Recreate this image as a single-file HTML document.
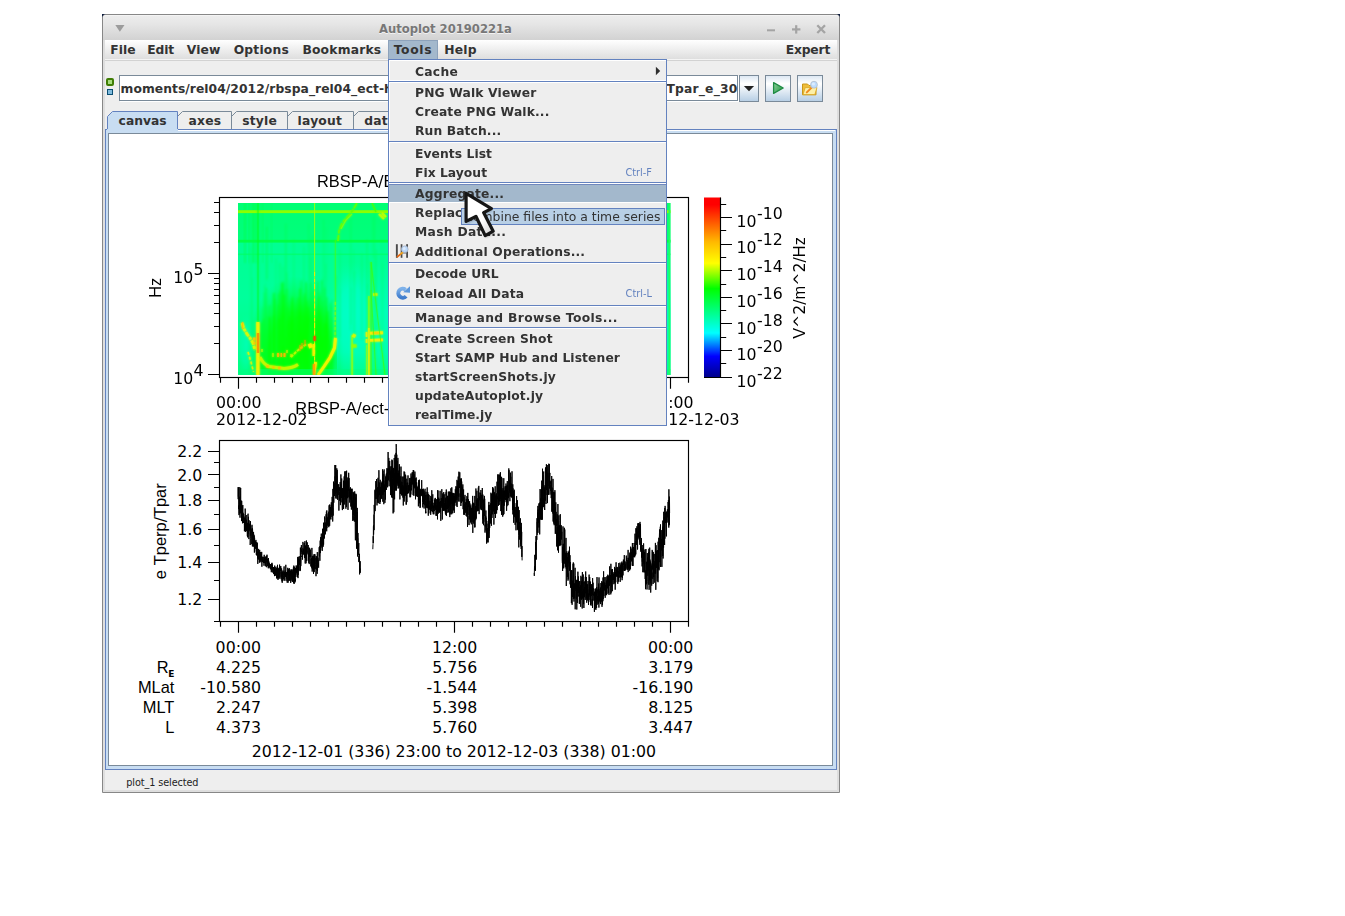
<!DOCTYPE html>
<html><head><meta charset="utf-8"><title>Autoplot 20190221a</title>
<style>
html,body{margin:0;padding:0;background:#fff;}
body{width:1345px;height:916px;position:relative;overflow:hidden;font-family:'DejaVu Sans', 'Liberation Sans', sans-serif;color:#333;}
.abs{position:absolute;box-sizing:border-box;}
.t{position:absolute;white-space:nowrap;line-height:20px;height:20px;}
svg{position:absolute;left:0;top:0;overflow:visible;}
.btn{border:1px solid #7a8a99;background:linear-gradient(#dde8f3,#fff 30%,#fff 32%,#b8cfe5);}
</style></head>
<body>
<div id="window">
<div class="abs" style="left:102px;top:14px;width:4px;height:4px;background:#0b1b3d;"></div>
<div class="abs" style="left:836px;top:14px;width:4px;height:4px;background:#0b1b3d;"></div>
<div class="abs" style="left:102px;top:14px;width:738px;height:779px;border:1px solid #878787;border-radius:4px 4px 0 0;background:#eee;box-shadow:inset 2px 0 0 #dedede, inset -2px 0 0 #dedede, inset 0 -2px 0 #dedede;"></div>
<div class="abs" style="left:103px;top:15px;width:736px;height:25px;background:linear-gradient(#ededed,#e6e6e6 35%,#d2d2d2);border-radius:3px 3px 0 0;box-shadow:inset 0 1px 0 #f4f4f4;"></div>
<div class="t" style="top:19.00px;font-size:11.6px;font-family:'DejaVu Sans', 'Liberation Sans', sans-serif;color:#777;font-weight:bold;left:145.50px;width:600px;text-align:center;text-shadow:0 1px 0 #f2f2f2;">Autoplot 20190221a</div>
<svg width="1345" height="916"><path d="M115.3 25 L124.5 25 L119.9 31.8 Z" fill="#9c9c9c"/><rect x="767" y="29.3" width="8" height="2" fill="#a4a4a4"/><rect x="792" y="28.3" width="8.4" height="2.2" fill="#a4a4a4"/><rect x="795.1" y="25.2" width="2.2" height="8.4" fill="#a4a4a4"/><path d="M817.3 25.3 L825 33 M825 25.3 L817.3 33" stroke="#a4a4a4" stroke-width="2.3" fill="none"/></svg>
<div class="abs" style="left:105px;top:40px;width:732px;height:21px;background:linear-gradient(#fff,#dedede 19px,#f4f4f4 19px,#f4f4f4 20px,#d2d2d2 20px);"></div>
<div class="abs" style="left:388px;top:40px;width:50px;height:20px;background:#a3b8cc;border:1px solid #8da2bb;border-bottom:none;"></div>
<div class="t" style="top:40.00px;font-size:12.3px;font-family:'DejaVu Sans', 'Liberation Sans', sans-serif;color:#333;font-weight:bold;left:110.30px;letter-spacing:0.023px;">File</div>
<div class="t" style="top:40.00px;font-size:12.3px;font-family:'DejaVu Sans', 'Liberation Sans', sans-serif;color:#333;font-weight:bold;left:147.20px;letter-spacing:-0.079px;">Edit</div>
<div class="t" style="top:40.00px;font-size:12.3px;font-family:'DejaVu Sans', 'Liberation Sans', sans-serif;color:#333;font-weight:bold;left:186.80px;letter-spacing:0.1px;">View</div>
<div class="t" style="top:40.00px;font-size:12.3px;font-family:'DejaVu Sans', 'Liberation Sans', sans-serif;color:#333;font-weight:bold;left:233.70px;letter-spacing:0.2px;">Options</div>
<div class="t" style="top:40.00px;font-size:12.3px;font-family:'DejaVu Sans', 'Liberation Sans', sans-serif;color:#333;font-weight:bold;left:302.40px;letter-spacing:0.2px;">Bookmarks</div>
<div class="t" style="top:40.00px;font-size:12.3px;font-family:'DejaVu Sans', 'Liberation Sans', sans-serif;color:#333;font-weight:bold;left:393.70px;letter-spacing:0.662px;">Tools</div>
<div class="t" style="top:40.00px;font-size:12.3px;font-family:'DejaVu Sans', 'Liberation Sans', sans-serif;color:#333;font-weight:bold;left:444.20px;letter-spacing:0.221px;">Help</div>
<div class="t" style="top:40.00px;font-size:12.3px;font-family:'DejaVu Sans', 'Liberation Sans', sans-serif;color:#333;font-weight:bold;left:785.70px;letter-spacing:-0.155px;">Expert</div>
<div class="abs" style="left:106px;top:78px;width:8px;height:8px;border:2px solid #3f7d04;border-radius:2px;background:#a6dc7c;"></div>
<div class="abs" style="left:107px;top:89px;width:6px;height:6px;border:1px solid #0a4e74;background:#7fbbdd;"></div>
<div class="abs" style="left:119px;top:75px;width:619px;height:26px;border:1px solid #7a8a99;background:#fff;box-shadow:inset 1px 1px 0 #fff, 1px 1px 0 #fff;"></div>
<div class="t" style="top:79.00px;font-size:12.3px;font-family:'DejaVu Sans', 'Liberation Sans', sans-serif;color:#333;font-weight:bold;left:120.60px;letter-spacing:0.05px;width:330px;overflow:hidden;">moments/rel04/2012/rbspa_rel04_ect-hope-mom-L3_20121202</div>
<div class="abs" style="left:470px;top:76px;width:267.5px;height:24px;overflow:hidden;"><div class="t" style="top:3.00px;font-size:12.3px;font-family:'DejaVu Sans', 'Liberation Sans', sans-serif;color:#333;font-weight:bold;left:0.00px;letter-spacing:0.2px;left:auto;right:0;">_v6.1.0.cdf?Tperp_e_30/Tpar_e_30</div></div>
<div class="abs btn" style="left:739px;top:75px;width:20px;height:27px;"></div>
<div class="abs btn" style="left:765px;top:75px;width:26px;height:27px;"></div>
<div class="abs btn" style="left:797px;top:75px;width:26px;height:27px;"></div>
<svg width="1345" height="916"><path d="M743.9 86.1 L754.1 86.1 L749 91.2 Z" fill="#222"/><defs><linearGradient id="gplay" x1="0" y1="0" x2="1" y2="0.6"><stop offset="0" stop-color="#8ad19a"/><stop offset="1" stop-color="#2f9a4a"/></linearGradient></defs><path d="M773.6 82.6 L783.2 88 L773.6 93.4 Z" fill="url(#gplay)" stroke="#1f8c44" stroke-width="1.3" stroke-linejoin="round"/><path d="M802.5 84 h5 l1.5 1.5 h7 v9.3 h-13.5 z" fill="#efbe3c" stroke="#c9971a" stroke-width="1"/><path d="M803 94.6 l2.2 -7 h11.8 l-2.2 7 z" fill="#fdf0a8" stroke="#d9a520" stroke-width="0.8"/><path d="M811.6 87.6 L806.8 92.4" stroke="#f08a20" stroke-width="2" stroke-linecap="round"/><circle cx="814" cy="84.7" r="3.4" fill="#bcdcff" stroke="#b9c4d4" stroke-width="1"/><circle cx="813.4" cy="84" r="1.6" fill="#dcecff"/></svg>
<svg width="1345" height="916"><path d="M353.5 130 L353.5 116.5 L358.5 111.5 L419.5 111.5 L419.5 130" fill="#eeeeee" stroke="#7a8a99" stroke-width="1"/><path d="M287.5 130 L287.5 116.5 L292.5 111.5 L353.5 111.5 L353.5 130" fill="#eeeeee" stroke="#7a8a99" stroke-width="1"/><path d="M231.5 130 L231.5 116.5 L236.5 111.5 L287.5 111.5 L287.5 130" fill="#eeeeee" stroke="#7a8a99" stroke-width="1"/><path d="M177.5 130 L177.5 116.5 L182.5 111.5 L231.5 111.5 L231.5 130" fill="#eeeeee" stroke="#7a8a99" stroke-width="1"/><path d="M107.5 130 L107.5 116.5 L112.5 111.5 L177.5 111.5 L177.5 130" fill="#c8ddf2" stroke="#6382bf" stroke-width="1"/></svg>
<div class="t" style="top:111.00px;font-size:12.3px;font-family:'DejaVu Sans', 'Liberation Sans', sans-serif;color:#333;font-weight:bold;left:118.60px;letter-spacing:0.01px;">canvas</div>
<div class="t" style="top:111.00px;font-size:12.3px;font-family:'DejaVu Sans', 'Liberation Sans', sans-serif;color:#333;font-weight:bold;left:188.60px;letter-spacing:0.2px;">axes</div>
<div class="t" style="top:111.00px;font-size:12.3px;font-family:'DejaVu Sans', 'Liberation Sans', sans-serif;color:#333;font-weight:bold;left:242.20px;letter-spacing:0.2px;">style</div>
<div class="t" style="top:111.00px;font-size:12.3px;font-family:'DejaVu Sans', 'Liberation Sans', sans-serif;color:#333;font-weight:bold;left:297.60px;letter-spacing:0.2px;">layout</div>
<div class="t" style="top:111.00px;font-size:12.3px;font-family:'DejaVu Sans', 'Liberation Sans', sans-serif;color:#333;font-weight:bold;left:364.20px;letter-spacing:0.2px;">data</div>
<div class="abs" style="left:105px;top:129px;width:732px;height:641px;border:1px solid #6382bf;background:#c8ddf2;"></div>
<div class="abs" style="left:178px;top:130px;width:657px;height:1px;background:#fff;"></div>
<div class="abs" style="left:107px;top:129px;width:70.5px;height:2px;background:#c8ddf2;"></div>
<div class="abs" style="left:108px;top:133px;width:725px;height:633px;border:1px solid #7a8a99;background:#fff;"></div>
<div class="t" style="top:773.00px;font-size:9.7px;font-family:'DejaVu Sans', 'Liberation Sans', sans-serif;color:#222;left:126.30px;letter-spacing:-0.1px;">plot_1 selected</div>
<div id="plots"><svg id="canvas" width="1345" height="916" font-family="'DejaVu Sans', sans-serif" font-size="15.75" fill="#000">
<defs>
<linearGradient id="cb" x1="0" y1="1" x2="0" y2="0">
<stop offset="0" stop-color="#000089"/><stop offset="0.1176" stop-color="#0000ff"/><stop offset="0.247" stop-color="#00ffff"/>
<stop offset="0.494" stop-color="#00ff00"/><stop offset="0.635" stop-color="#ffff00"/><stop offset="0.753" stop-color="#ffb900"/>
<stop offset="0.867" stop-color="#ff5400"/><stop offset="0.96" stop-color="#ff0000"/><stop offset="1" stop-color="#ff0000"/></linearGradient>
<linearGradient id="sgv" x1="0" y1="0" x2="0" y2="1">
<stop offset="0" stop-color="#00ff74"/><stop offset="0.22" stop-color="#00ff7c"/><stop offset="0.23" stop-color="#00ff92"/><stop offset="0.55" stop-color="#00ff9c"/><stop offset="1" stop-color="#00ff80"/></linearGradient>
<linearGradient id="cyr" x1="0" y1="0" x2="0" y2="1"><stop offset="0" stop-color="#00ffc0" stop-opacity="0"/><stop offset="0.45" stop-color="#00ffc4" stop-opacity="0.75"/><stop offset="0.8" stop-color="#00ffc0" stop-opacity="0.7"/><stop offset="1" stop-color="#00ffa0" stop-opacity="0.5"/></linearGradient>
<radialGradient id="blobg"><stop offset="0" stop-color="#00ff00" stop-opacity="1"/><stop offset="0.55" stop-color="#00ff10" stop-opacity="0.85"/><stop offset="1" stop-color="#00ff40" stop-opacity="0"/></radialGradient>
<radialGradient id="blobc"><stop offset="0" stop-color="#00ffd0" stop-opacity="1"/><stop offset="0.55" stop-color="#00ffc0" stop-opacity="0.8"/><stop offset="1" stop-color="#00ffa0" stop-opacity="0"/></radialGradient>
<filter id="bl1" x="-20%" y="-20%" width="140%" height="140%" color-interpolation-filters="sRGB"><feGaussianBlur stdDeviation="0.8"/></filter>
<filter id="bl2" x="-20%" y="-20%" width="140%" height="140%"><feGaussianBlur stdDeviation="1.4"/></filter>
<clipPath id="sgclip"><rect x="238" y="203" width="432.5" height="172"/></clipPath>
</defs>
<g clip-path="url(#sgclip)">
<rect x="238" y="203" width="433" height="172" fill="url(#sgv)"/>
<ellipse cx="296" cy="356" rx="50" ry="80" fill="url(#blobg)"/>
<ellipse cx="302" cy="342" rx="34" ry="46" fill="url(#blobg)"/>
<ellipse cx="322" cy="345" rx="16" ry="40" fill="url(#blobg)" opacity="0.8"/>
<ellipse cx="352" cy="318" rx="26" ry="56" fill="url(#blobc)"/>
<ellipse cx="246" cy="345" rx="10" ry="32" fill="url(#blobc)" opacity="0.55"/>
<rect x="337" y="262" width="334" height="113" fill="url(#cyr)"/>
<ellipse cx="560" cy="330" rx="120" ry="70" fill="url(#blobc)" opacity="0.7"/>
<g filter="url(#bl1)">
<rect x="277.6" y="304.5" width="1.2" height="70.5" fill="#00ff00" opacity="0.41"/>
<rect x="306.3" y="282.9" width="0.8" height="92.1" fill="#00ff00" opacity="0.49"/>
<rect x="279.2" y="290.5" width="1.8" height="84.5" fill="#00ff00" opacity="0.36"/>
<rect x="321.9" y="301.4" width="1.4" height="73.6" fill="#00ff00" opacity="0.25"/>
<rect x="307.0" y="319.1" width="1.3" height="55.9" fill="#00ff00" opacity="0.46"/>
<rect x="309.7" y="282.9" width="1.6" height="92.1" fill="#00ff00" opacity="0.41"/>
<rect x="282.3" y="281.4" width="1.7" height="93.6" fill="#00ff00" opacity="0.37"/>
<rect x="313.2" y="319.5" width="1.5" height="55.5" fill="#00ff00" opacity="0.52"/>
<rect x="289.2" y="316.0" width="1.2" height="59.0" fill="#00ff00" opacity="0.53"/>
<rect x="325.0" y="284.4" width="0.9" height="90.6" fill="#00ff00" opacity="0.28"/>
<rect x="331.4" y="299.6" width="1.4" height="75.4" fill="#00ff00" opacity="0.31"/>
<rect x="297.5" y="297.4" width="1.2" height="77.6" fill="#00ff00" opacity="0.40"/>
<rect x="303.2" y="320.7" width="1.5" height="54.3" fill="#00ff00" opacity="0.53"/>
<rect x="323.4" y="324.6" width="1.5" height="50.4" fill="#00ff00" opacity="0.26"/>
<rect x="323.7" y="323.4" width="1.7" height="51.6" fill="#00ff00" opacity="0.40"/>
<rect x="312.8" y="289.5" width="1.6" height="85.5" fill="#00ff00" opacity="0.40"/>
<rect x="281.1" y="282.9" width="1.7" height="92.1" fill="#00ff00" opacity="0.55"/>
<rect x="266.6" y="316.0" width="1.2" height="59.0" fill="#00ff00" opacity="0.25"/>
<rect x="281.7" y="314.6" width="1.7" height="60.4" fill="#00ff00" opacity="0.22"/>
<rect x="305.5" y="282.0" width="1.5" height="93.0" fill="#00ff00" opacity="0.32"/>
<rect x="325.2" y="324.1" width="1.3" height="50.9" fill="#00ff00" opacity="0.55"/>
<rect x="282.9" y="283.5" width="1.4" height="91.5" fill="#00ff00" opacity="0.21"/>
<rect x="274.6" y="298.4" width="1.4" height="76.6" fill="#00ff00" opacity="0.25"/>
<rect x="263.1" y="319.1" width="1.1" height="55.9" fill="#00ff00" opacity="0.54"/>
<rect x="326.4" y="297.0" width="1.3" height="78.0" fill="#00ff00" opacity="0.38"/>
<rect x="307.6" y="306.8" width="1.4" height="68.2" fill="#00ff00" opacity="0.42"/>
<rect x="329.6" y="302.8" width="1.2" height="72.2" fill="#00ff00" opacity="0.45"/>
<rect x="277.6" y="293.5" width="1.8" height="81.5" fill="#00ff00" opacity="0.38"/>
<rect x="300.6" y="280.5" width="1.2" height="94.5" fill="#00ff00" opacity="0.40"/>
<rect x="261.5" y="307.7" width="1.4" height="67.3" fill="#00ff00" opacity="0.22"/>
<rect x="306.4" y="301.0" width="1.5" height="74.0" fill="#00ff00" opacity="0.32"/>
<rect x="312.3" y="313.2" width="0.8" height="61.8" fill="#00ff00" opacity="0.22"/>
<rect x="310.0" y="323.3" width="1.1" height="51.7" fill="#00ff00" opacity="0.36"/>
<rect x="303.9" y="294.4" width="1.2" height="80.6" fill="#00ff00" opacity="0.31"/>
<rect x="287.3" y="306.8" width="1.1" height="68.2" fill="#00ff00" opacity="0.33"/>
<rect x="317.1" y="281.2" width="1.4" height="93.8" fill="#00ff00" opacity="0.46"/>
<rect x="282.9" y="290.0" width="1.6" height="85.0" fill="#00ff00" opacity="0.28"/>
<rect x="273.9" y="299.6" width="1.5" height="75.4" fill="#00ff00" opacity="0.24"/>
<rect x="283.8" y="295.0" width="1.6" height="80.0" fill="#00ff00" opacity="0.35"/>
<rect x="323.3" y="287.6" width="1.1" height="87.4" fill="#00ff00" opacity="0.43"/>
<rect x="325.5" y="300.3" width="1.0" height="74.7" fill="#00ff00" opacity="0.24"/>
<rect x="299.2" y="288.6" width="1.6" height="86.4" fill="#00ff00" opacity="0.49"/>
<rect x="273.6" y="292.5" width="1.6" height="82.5" fill="#00ff00" opacity="0.42"/>
<rect x="319.7" y="295.5" width="0.9" height="79.5" fill="#00ff00" opacity="0.30"/>
<rect x="318.7" y="292.2" width="1.1" height="82.8" fill="#00ff00" opacity="0.35"/>
<rect x="291.1" y="298.4" width="1.7" height="76.6" fill="#00ff00" opacity="0.25"/>
<rect x="260.3" y="322.4" width="1.7" height="52.6" fill="#00ff00" opacity="0.55"/>
<rect x="292.1" y="322.8" width="1.7" height="52.2" fill="#00ff00" opacity="0.28"/>
<rect x="315.2" y="317.7" width="1.5" height="57.3" fill="#00ff00" opacity="0.38"/>
<rect x="281.4" y="295.3" width="1.0" height="79.7" fill="#00ff00" opacity="0.22"/>
<rect x="303.6" y="292.9" width="1.6" height="82.1" fill="#00ff00" opacity="0.22"/>
<rect x="326.9" y="311.2" width="1.7" height="63.8" fill="#00ff00" opacity="0.51"/>
<rect x="326.6" y="306.0" width="0.8" height="69.0" fill="#00ff00" opacity="0.46"/>
<rect x="272.7" y="293.5" width="1.5" height="81.5" fill="#00ff00" opacity="0.38"/>
<rect x="290.6" y="322.3" width="1.4" height="52.7" fill="#00ff00" opacity="0.32"/>
<rect x="278.7" y="318.8" width="1.3" height="56.2" fill="#00ff00" opacity="0.47"/>
<rect x="286.0" y="288.9" width="1.3" height="86.1" fill="#00ff00" opacity="0.49"/>
<rect x="272.7" y="315.6" width="1.7" height="59.4" fill="#00ff00" opacity="0.48"/>
<rect x="320.9" y="280.3" width="1.4" height="94.7" fill="#00ff00" opacity="0.50"/>
<rect x="263.7" y="292.2" width="1.1" height="82.8" fill="#00ff00" opacity="0.38"/>
<rect x="291.3" y="301.3" width="1.6" height="73.7" fill="#00ff00" opacity="0.20"/>
<rect x="264.1" y="285.7" width="0.9" height="89.3" fill="#00ff00" opacity="0.22"/>
<rect x="332.1" y="318.5" width="0.9" height="56.5" fill="#00ff00" opacity="0.38"/>
<rect x="283.4" y="294.2" width="1.2" height="80.8" fill="#00ff00" opacity="0.43"/>
<rect x="303.4" y="296.2" width="1.0" height="78.8" fill="#00ff00" opacity="0.32"/>
<rect x="269.2" y="305.0" width="1.5" height="70.0" fill="#00ff00" opacity="0.33"/>
<rect x="265.9" y="288.0" width="1.2" height="87.0" fill="#00ff00" opacity="0.41"/>
<rect x="317.9" y="297.1" width="1.6" height="77.9" fill="#00ff00" opacity="0.42"/>
<rect x="291.9" y="296.8" width="1.3" height="78.2" fill="#00ff00" opacity="0.45"/>
<rect x="291.1" y="311.2" width="1.3" height="63.8" fill="#00ff00" opacity="0.29"/>
<rect x="299.7" y="311.3" width="0.9" height="63.7" fill="#00ff00" opacity="0.35"/>
<rect x="291.5" y="319.6" width="1.7" height="55.4" fill="#00ff00" opacity="0.33"/>
<rect x="326.4" y="315.6" width="1.1" height="59.4" fill="#00ff00" opacity="0.36"/>
<rect x="269.1" y="316.6" width="1.5" height="58.4" fill="#00ff00" opacity="0.51"/>
<rect x="318.6" y="310.0" width="1.5" height="65.0" fill="#00ff00" opacity="0.40"/>
<rect x="267.6" y="306.4" width="0.8" height="68.6" fill="#00ff00" opacity="0.25"/>
<rect x="317.3" y="282.0" width="0.9" height="93.0" fill="#00ff00" opacity="0.23"/>
<rect x="325.2" y="288.1" width="0.8" height="86.9" fill="#00ff00" opacity="0.49"/>
<rect x="269.0" y="318.0" width="1.5" height="57.0" fill="#00ff00" opacity="0.49"/>
<rect x="330.5" y="306.1" width="1.6" height="68.9" fill="#00ff00" opacity="0.21"/>
<rect x="353.1" y="249.0" width="1.2" height="115.8" fill="#00ff30" opacity="0.17"/>
<rect x="350.3" y="287.1" width="1.2" height="37.3" fill="#00ff30" opacity="0.21"/>
<rect x="322.6" y="277.5" width="1.2" height="59.1" fill="#00ff30" opacity="0.19"/>
<rect x="275.5" y="258.4" width="1.2" height="120.4" fill="#00ff30" opacity="0.23"/>
<rect x="293.1" y="238.7" width="1.2" height="72.0" fill="#00ff30" opacity="0.23"/>
<rect x="250.5" y="248.0" width="1.2" height="146.8" fill="#00ff30" opacity="0.23"/>
<rect x="350.1" y="217.5" width="1.2" height="112.9" fill="#00ff30" opacity="0.30"/>
<rect x="339.1" y="249.5" width="1.2" height="88.0" fill="#00ff30" opacity="0.28"/>
<rect x="372.6" y="216.4" width="1.2" height="41.5" fill="#00ff30" opacity="0.30"/>
<rect x="375.5" y="249.6" width="1.2" height="83.2" fill="#00ff30" opacity="0.29"/>
<rect x="265.9" y="227.1" width="1.2" height="53.9" fill="#00ff30" opacity="0.27"/>
<rect x="285.2" y="223.9" width="1.2" height="112.9" fill="#00ff30" opacity="0.34"/>
<rect x="282.4" y="266.5" width="1.2" height="79.6" fill="#00ff30" opacity="0.32"/>
<rect x="325.7" y="227.0" width="1.2" height="56.1" fill="#00ff30" opacity="0.15"/>
<rect x="309.9" y="237.4" width="1.2" height="50.7" fill="#00ff30" opacity="0.22"/>
<rect x="286.3" y="272.7" width="1.2" height="47.2" fill="#00ff30" opacity="0.35"/>
<rect x="309.9" y="256.9" width="1.2" height="86.2" fill="#00ff30" opacity="0.32"/>
<rect x="361.2" y="253.1" width="1.2" height="87.8" fill="#00ff30" opacity="0.29"/>
<rect x="366.5" y="239.0" width="1.2" height="118.0" fill="#00ff30" opacity="0.34"/>
<rect x="308.1" y="223.7" width="1.2" height="58.2" fill="#00ff30" opacity="0.29"/>
<rect x="339.3" y="289.3" width="1.2" height="132.5" fill="#00ff30" opacity="0.20"/>
<rect x="266.4" y="226.3" width="1.2" height="52.5" fill="#00ff30" opacity="0.29"/>
<rect x="366.8" y="284.0" width="1.2" height="60.6" fill="#00ff30" opacity="0.32"/>
<rect x="285.0" y="241.1" width="1.2" height="117.5" fill="#00ff30" opacity="0.17"/>
<rect x="251.9" y="278.1" width="1.2" height="65.0" fill="#00ff30" opacity="0.22"/>
<rect x="325.0" y="263.8" width="1.2" height="30.8" fill="#00ff30" opacity="0.22"/>
<rect x="303.4" y="246.7" width="1.2" height="55.2" fill="#00ff30" opacity="0.27"/>
<rect x="381.3" y="238.2" width="1.2" height="95.3" fill="#00ff30" opacity="0.17"/>
<rect x="279.2" y="262.9" width="1.2" height="43.5" fill="#00ff30" opacity="0.33"/>
<rect x="374.3" y="211.7" width="1.2" height="143.0" fill="#00ff30" opacity="0.22"/>
<rect x="353.9" y="271.2" width="1.2" height="65.5" fill="#00ff30" opacity="0.29"/>
<rect x="336.1" y="275.5" width="1.2" height="61.9" fill="#00ff30" opacity="0.30"/>
<rect x="382.2" y="263.6" width="1.2" height="94.3" fill="#00ff30" opacity="0.17"/>
<rect x="312.1" y="234.7" width="1.2" height="116.2" fill="#00ff30" opacity="0.29"/>
<rect x="323.0" y="219.4" width="1.2" height="107.5" fill="#00ff30" opacity="0.28"/>
<rect x="264.9" y="283.1" width="1.2" height="108.6" fill="#00ff30" opacity="0.17"/>
</g>
<rect x="244" y="203" width="2" height="60" fill="#00ff30" opacity="0.35" filter="url(#bl1)"/>
<rect x="248.5" y="203" width="1.5" height="60" fill="#00ff30" opacity="0.3" filter="url(#bl1)"/>
<rect x="252" y="203" width="3" height="60" fill="#00ff30" opacity="0.4" filter="url(#bl1)"/>
<rect x="256" y="203" width="2" height="60" fill="#00ff30" opacity="0.3" filter="url(#bl1)"/>
<rect x="262" y="203" width="1.5" height="60" fill="#00ff30" opacity="0.25" filter="url(#bl1)"/>
<rect x="271" y="203" width="1.5" height="60" fill="#00ff30" opacity="0.2" filter="url(#bl1)"/>
<rect x="238" y="210.2" width="433" height="2.9" fill="#8cff00"/>
<rect x="238" y="239.8" width="433" height="2.8" fill="#00ff40" opacity="0.9"/>
<rect x="238" y="253.5" width="433" height="1.6" fill="#00ff60" opacity="0.6"/>
<rect x="238" y="369" width="433" height="6" fill="#00ff84" opacity="0.5"/>
<rect x="314.1" y="203" width="1" height="172" fill="#a8ff00" opacity="0.9"/>
<path d="M314.6 272 V375" stroke="#ffe400" stroke-width="1" stroke-dasharray="4 3 3 2 5 2.5" fill="none" opacity="0.9"/>
<g filter="url(#bl1)"><rect x="257.2" y="203" width="1.6" height="125" fill="#00ff18" opacity="0.45"/><rect x="256.3" y="322" width="3.2" height="53" fill="#f4f400"/><rect x="256.8" y="333" width="2.4" height="20" fill="#ff9000"/><rect x="334.8" y="240" width="1.2" height="100" fill="#50ff00" opacity="0.5"/><rect x="368.2" y="296" width="1.4" height="79" fill="#90ff00" opacity="0.9"/><rect x="368.2" y="328" width="1.4" height="47" fill="#f0f000"/><rect x="370.6" y="262" width="1" height="113" fill="#40ff00" opacity="0.7"/><rect x="351.4" y="335" width="1.4" height="40" fill="#a0ff00" opacity="0.9"/><rect x="366" y="345" width="1" height="30" fill="#a0ff00" opacity="0.7"/><g fill="none"><path d="M242 323 L244 329 L247 334 L250 338 L253 343 L255 350" stroke="#e0f800" stroke-width="2.8" stroke-dasharray="5 1 3 1"/><path d="M242.5 322 L242.5 329" stroke="#ffc000" stroke-width="1.4"/><path d="M253 339 L255.5 339 M253.5 343 L255.5 343" stroke="#ffc800" stroke-width="3"/><path d="M248 352 L251 362 L253.5 372" stroke="#e8f000" stroke-width="1.6" stroke-dasharray="3 2"/><path d="M260 357 Q263 364 269 366.5 L284 368.5 Q293 368 298 364.5" stroke="#c8f800" stroke-width="3"/><path d="M266 366 L269 367 M272.5 367.5 L274.5 367.5 M278 368 L281 368" stroke="#ffc400" stroke-width="2.6"/><path d="M277 355 L279 355 M280.5 355 L282 355 M283.5 355 L285.5 355" stroke="#ffb800" stroke-width="4"/><path d="M262 349 V352 M273 353 V357 M287 350 V353 M291 354 V357" stroke="#f0f000" stroke-width="1"/><path d="M291 357 L296 352 L302 347 L307 344" stroke="#c8f800" stroke-width="1.8" stroke-dasharray="3 1.2"/><path d="M300 345 V351 M302 343 V349 M305 340 V346" stroke="#ff9800" stroke-width="0.9"/><path d="M308.5 346.5 L312 345" stroke="#fff000" stroke-width="4.2"/><path d="M314.6 336 L314.6 341" stroke="#ff4000" stroke-width="2"/><path d="M313.5 344 V356" stroke="#fff000" stroke-width="2"/><path d="M335 340 L335.3 300" stroke="#a0f800" stroke-width="1.3" stroke-dasharray="3 2" opacity="0.7"/><path d="M314 375 L316 362" stroke="#ffe800" stroke-width="2.2"/><path d="M318 375 L324 366.5 L330 357.5 L334.5 348 L335.5 338" stroke="#f8f400" stroke-width="3"/><path d="M314 364 V375" stroke="#ffa000" stroke-width="2.4"/><path d="M338 241 L339 231 L342 223 L348 216 L353 210 L357 203" stroke="#68ff00" stroke-width="1.7" stroke-dasharray="6 1.5 4 1"/><path d="M341 229 L346 220 L352 214" stroke="#98ff00" stroke-width="1.2" opacity="0.8"/><path d="M372 203 L376 212" stroke="#50ff00" stroke-width="1.2"/><path d="M379 214 L384 219 M382 213 L386 217" stroke="#c0ff00" stroke-width="2.4"/><path d="M370 333.3 L383 332.8" stroke="#f8f000" stroke-width="3"/><path d="M372 333 L380 333" stroke="#ffc800" stroke-width="1.4"/><path d="M370 340.3 L383 339.8" stroke="#f8f000" stroke-width="2.8"/><path d="M366.5 332 V337 M366.5 339 V343" stroke="#f0f000" stroke-width="1.6"/><path d="M352.5 335 L355.5 336.5" stroke="#d8f800" stroke-width="3.4"/><path d="M351.5 346 L356.5 346" stroke="#98ff00" stroke-width="3.2"/><path d="M373 294.5 L377.5 294.5" stroke="#c8f800" stroke-width="2.6"/><path d="M371 262 L378 320 L385 375 M371 290 L376 375" stroke="#40ff00" stroke-width="1" opacity="0.7"/></g></g>
<g opacity="0.85"><rect x="257.2" y="203" width="1.6" height="125" fill="#00ff18" opacity="0.45"/><rect x="256.3" y="322" width="3.2" height="53" fill="#f4f400"/><rect x="256.8" y="333" width="2.4" height="20" fill="#ff9000"/><rect x="334.8" y="240" width="1.2" height="100" fill="#50ff00" opacity="0.5"/><rect x="368.2" y="296" width="1.4" height="79" fill="#90ff00" opacity="0.9"/><rect x="368.2" y="328" width="1.4" height="47" fill="#f0f000"/><rect x="370.6" y="262" width="1" height="113" fill="#40ff00" opacity="0.7"/><rect x="351.4" y="335" width="1.4" height="40" fill="#a0ff00" opacity="0.9"/><rect x="366" y="345" width="1" height="30" fill="#a0ff00" opacity="0.7"/><g fill="none"><path d="M242 323 L244 329 L247 334 L250 338 L253 343 L255 350" stroke="#e0f800" stroke-width="2.8" stroke-dasharray="5 1 3 1"/><path d="M242.5 322 L242.5 329" stroke="#ffc000" stroke-width="1.4"/><path d="M253 339 L255.5 339 M253.5 343 L255.5 343" stroke="#ffc800" stroke-width="3"/><path d="M248 352 L251 362 L253.5 372" stroke="#e8f000" stroke-width="1.6" stroke-dasharray="3 2"/><path d="M260 357 Q263 364 269 366.5 L284 368.5 Q293 368 298 364.5" stroke="#c8f800" stroke-width="3"/><path d="M266 366 L269 367 M272.5 367.5 L274.5 367.5 M278 368 L281 368" stroke="#ffc400" stroke-width="2.6"/><path d="M277 355 L279 355 M280.5 355 L282 355 M283.5 355 L285.5 355" stroke="#ffb800" stroke-width="4"/><path d="M262 349 V352 M273 353 V357 M287 350 V353 M291 354 V357" stroke="#f0f000" stroke-width="1"/><path d="M291 357 L296 352 L302 347 L307 344" stroke="#c8f800" stroke-width="1.8" stroke-dasharray="3 1.2"/><path d="M300 345 V351 M302 343 V349 M305 340 V346" stroke="#ff9800" stroke-width="0.9"/><path d="M308.5 346.5 L312 345" stroke="#fff000" stroke-width="4.2"/><path d="M314.6 336 L314.6 341" stroke="#ff4000" stroke-width="2"/><path d="M313.5 344 V356" stroke="#fff000" stroke-width="2"/><path d="M335 340 L335.3 300" stroke="#a0f800" stroke-width="1.3" stroke-dasharray="3 2" opacity="0.7"/><path d="M314 375 L316 362" stroke="#ffe800" stroke-width="2.2"/><path d="M318 375 L324 366.5 L330 357.5 L334.5 348 L335.5 338" stroke="#f8f400" stroke-width="3"/><path d="M314 364 V375" stroke="#ffa000" stroke-width="2.4"/><path d="M338 241 L339 231 L342 223 L348 216 L353 210 L357 203" stroke="#68ff00" stroke-width="1.7" stroke-dasharray="6 1.5 4 1"/><path d="M341 229 L346 220 L352 214" stroke="#98ff00" stroke-width="1.2" opacity="0.8"/><path d="M372 203 L376 212" stroke="#50ff00" stroke-width="1.2"/><path d="M379 214 L384 219 M382 213 L386 217" stroke="#c0ff00" stroke-width="2.4"/><path d="M370 333.3 L383 332.8" stroke="#f8f000" stroke-width="3"/><path d="M372 333 L380 333" stroke="#ffc800" stroke-width="1.4"/><path d="M370 340.3 L383 339.8" stroke="#f8f000" stroke-width="2.8"/><path d="M366.5 332 V337 M366.5 339 V343" stroke="#f0f000" stroke-width="1.6"/><path d="M352.5 335 L355.5 336.5" stroke="#d8f800" stroke-width="3.4"/><path d="M351.5 346 L356.5 346" stroke="#98ff00" stroke-width="3.2"/><path d="M373 294.5 L377.5 294.5" stroke="#c8f800" stroke-width="2.6"/><path d="M371 262 L378 320 L385 375 M371 290 L376 375" stroke="#40ff00" stroke-width="1" opacity="0.7"/></g></g>
<rect x="668.5" y="203" width="2" height="172" fill="#20ff60"/>
</g>
<g stroke="#000" stroke-width="1.15" fill="none" shape-rendering="auto">
<rect x="219.5" y="197.5" width="469" height="180"/>
<path d="M208 374.5 H219.5 M214 343.5 H219.5 M214 326.5 H219.5 M214 313.5 H219.5 M214 303.5 H219.5 M214 295.5 H219.5 M214 289.5 H219.5 M214 283.5 H219.5 M214 278.5 H219.5 M208 273.5 H219.5 M214 242.5 H219.5 M214 225.5 H219.5 M214 212.5 H219.5 M214 202.5 H219.5 M220.5 377.5 V382.8 M238.5 377.5 V388.7 M256.5 377.5 V382.8 M274.5 377.5 V382.8 M292.5 377.5 V382.8 M310.5 377.5 V382.8 M328.5 377.5 V382.8 M346.5 377.5 V382.8 M364.5 377.5 V382.8 M382.5 377.5 V382.8 M400.5 377.5 V382.8 M418.5 377.5 V382.8 M436.5 377.5 V382.8 M454.5 377.5 V388.7 M472.5 377.5 V382.8 M490.5 377.5 V382.8 M508.5 377.5 V382.8 M526.5 377.5 V382.8 M544.5 377.5 V382.8 M562.5 377.5 V382.8 M580.5 377.5 V382.8 M598.5 377.5 V382.8 M616.5 377.5 V382.8 M634.5 377.5 V382.8 M652.5 377.5 V382.8 M670.5 377.5 V388.7 M688.5 377.5 V382.8"/>
</g>
<text x="173.3" y="283" text-anchor="start" xml:space="preserve"><tspan font-family="'DejaVu Sans', sans-serif" font-size="15.75">10</tspan></text>
<text x="193.4" y="274.9" text-anchor="start" xml:space="preserve"><tspan font-family="'DejaVu Sans', sans-serif" font-size="15.75">5</tspan></text>
<text x="173.3" y="384" text-anchor="start" xml:space="preserve"><tspan font-family="'DejaVu Sans', sans-serif" font-size="15.75">10</tspan></text>
<text x="193.4" y="375.9" text-anchor="start" xml:space="preserve"><tspan font-family="'DejaVu Sans', sans-serif" font-size="15.75">4</tspan></text>
<text x="0" y="0" text-anchor="middle" xml:space="preserve" transform="translate(161.4 287.7) rotate(-90)"><tspan font-family="'Liberation Sans', sans-serif" font-size="16.4">Hz</tspan></text>
<text x="317" y="187" text-anchor="start" xml:space="preserve"><tspan font-family="'Liberation Sans', sans-serif" font-size="16.4">RBSP</tspan><tspan font-family="'DejaVu Sans', sans-serif" font-size="15.75">-</tspan><tspan font-family="'Liberation Sans', sans-serif" font-size="16.4">A</tspan><tspan font-family="'DejaVu Sans', sans-serif" font-size="15.75">/</tspan><tspan font-family="'Liberation Sans', sans-serif" font-size="16.4">EMFISIS</tspan><tspan font-family="'DejaVu Sans', sans-serif" font-size="15.75"> </tspan><tspan font-family="'Liberation Sans', sans-serif" font-size="16.4">HFR</tspan><tspan font-family="'DejaVu Sans', sans-serif" font-size="15.75"> </tspan><tspan font-family="'Liberation Sans', sans-serif" font-size="16.4">spectra</tspan><tspan font-family="'DejaVu Sans', sans-serif" font-size="15.75"> </tspan><tspan font-family="'Liberation Sans', sans-serif" font-size="16.4">electric</tspan><tspan font-family="'DejaVu Sans', sans-serif" font-size="15.75"> </tspan><tspan font-family="'Liberation Sans', sans-serif" font-size="16.4">field</tspan></text>
<text x="216.1" y="408.4" text-anchor="start" xml:space="preserve"><tspan font-family="'DejaVu Sans', sans-serif" font-size="15.75">00:00</tspan></text>
<text x="216.1" y="424.5" text-anchor="start" xml:space="preserve"><tspan font-family="'DejaVu Sans', sans-serif" font-size="15.75">2012-12-02</tspan></text>
<text x="648.1" y="408.4" text-anchor="start" xml:space="preserve"><tspan font-family="'DejaVu Sans', sans-serif" font-size="15.75">00:00</tspan></text>
<text x="648.1" y="424.5" text-anchor="start" xml:space="preserve"><tspan font-family="'DejaVu Sans', sans-serif" font-size="15.75">2012-12-03</tspan></text>
<text x="432.5" y="408.4" text-anchor="start" xml:space="preserve"><tspan font-family="'DejaVu Sans', sans-serif" font-size="15.75">12:00</tspan></text>
<text x="295.3" y="413.6" text-anchor="start" xml:space="preserve"><tspan font-family="'Liberation Sans', sans-serif" font-size="16.4">RBSP</tspan><tspan font-family="'DejaVu Sans', sans-serif" font-size="15.75">-</tspan><tspan font-family="'Liberation Sans', sans-serif" font-size="16.4">A</tspan><tspan font-family="'DejaVu Sans', sans-serif" font-size="15.75">/</tspan><tspan font-family="'Liberation Sans', sans-serif" font-size="16.4">ect</tspan><tspan font-family="'DejaVu Sans', sans-serif" font-size="15.75">-</tspan><tspan font-family="'Liberation Sans', sans-serif" font-size="16.4">hope</tspan><tspan font-family="'DejaVu Sans', sans-serif" font-size="15.75">-</tspan><tspan font-family="'Liberation Sans', sans-serif" font-size="16.4">mom</tspan><tspan font-family="'DejaVu Sans', sans-serif" font-size="15.75"> </tspan><tspan font-family="'Liberation Sans', sans-serif" font-size="16.4">e</tspan><tspan font-family="'DejaVu Sans', sans-serif" font-size="15.75"> </tspan><tspan font-family="'Liberation Sans', sans-serif" font-size="16.4">Tperp</tspan><tspan font-family="'DejaVu Sans', sans-serif" font-size="15.75">/</tspan><tspan font-family="'Liberation Sans', sans-serif" font-size="16.4">Tpar</tspan><tspan font-family="'DejaVu Sans', sans-serif" font-size="15.75"> </tspan><tspan font-family="'Liberation Sans', sans-serif" font-size="16.4">ratio</tspan><tspan font-family="'DejaVu Sans', sans-serif" font-size="15.75"> 30</tspan><tspan font-family="'Liberation Sans', sans-serif" font-size="16.4">eV</tspan></text>
<rect x="704" y="197.5" width="16.5" height="180" fill="url(#cb)"/>
<path d="M720.5 197.5 V378 M704 377.5 H720.5 M720.5 217.5 H732 M720.5 230.5 H726.2 M720.5 244.5 H732 M720.5 257.5 H726.2 M720.5 270.5 H732 M720.5 284.5 H726.2 M720.5 297.5 H732 M720.5 310.5 H726.2 M720.5 323.5 H732 M720.5 337.5 H726.2 M720.5 350.5 H732 M720.5 363.5 H726.2 M720.5 377.5 H732 M720.5 204.5 H726.2" stroke="#000" stroke-width="1.15" fill="none"/>
<text x="736.6" y="386.9" text-anchor="start" xml:space="preserve"><tspan font-family="'DejaVu Sans', sans-serif" font-size="15.75">10</tspan></text>
<text x="757" y="378.9" text-anchor="start" xml:space="preserve"><tspan font-family="'DejaVu Sans', sans-serif" font-size="15.75">-22</tspan></text>
<text x="736.6" y="360.2" text-anchor="start" xml:space="preserve"><tspan font-family="'DejaVu Sans', sans-serif" font-size="15.75">10</tspan></text>
<text x="757" y="352.2" text-anchor="start" xml:space="preserve"><tspan font-family="'DejaVu Sans', sans-serif" font-size="15.75">-20</tspan></text>
<text x="736.6" y="333.5" text-anchor="start" xml:space="preserve"><tspan font-family="'DejaVu Sans', sans-serif" font-size="15.75">10</tspan></text>
<text x="757" y="325.5" text-anchor="start" xml:space="preserve"><tspan font-family="'DejaVu Sans', sans-serif" font-size="15.75">-18</tspan></text>
<text x="736.6" y="306.8" text-anchor="start" xml:space="preserve"><tspan font-family="'DejaVu Sans', sans-serif" font-size="15.75">10</tspan></text>
<text x="757" y="298.8" text-anchor="start" xml:space="preserve"><tspan font-family="'DejaVu Sans', sans-serif" font-size="15.75">-16</tspan></text>
<text x="736.6" y="280.1" text-anchor="start" xml:space="preserve"><tspan font-family="'DejaVu Sans', sans-serif" font-size="15.75">10</tspan></text>
<text x="757" y="272.1" text-anchor="start" xml:space="preserve"><tspan font-family="'DejaVu Sans', sans-serif" font-size="15.75">-14</tspan></text>
<text x="736.6" y="253.4" text-anchor="start" xml:space="preserve"><tspan font-family="'DejaVu Sans', sans-serif" font-size="15.75">10</tspan></text>
<text x="757" y="245.4" text-anchor="start" xml:space="preserve"><tspan font-family="'DejaVu Sans', sans-serif" font-size="15.75">-12</tspan></text>
<text x="736.6" y="226.7" text-anchor="start" xml:space="preserve"><tspan font-family="'DejaVu Sans', sans-serif" font-size="15.75">10</tspan></text>
<text x="757" y="218.7" text-anchor="start" xml:space="preserve"><tspan font-family="'DejaVu Sans', sans-serif" font-size="15.75">-10</tspan></text>
<text x="0" y="0" text-anchor="middle" xml:space="preserve" transform="translate(805.2 288) rotate(-90)"><tspan font-family="'Liberation Sans', sans-serif" font-size="16.4">V</tspan><tspan font-family="'DejaVu Sans', sans-serif" font-size="15.75">^2/</tspan><tspan font-family="'Liberation Sans', sans-serif" font-size="16.4">m</tspan><tspan font-family="'DejaVu Sans', sans-serif" font-size="15.75">^2/</tspan><tspan font-family="'Liberation Sans', sans-serif" font-size="16.4">Hz</tspan></text>
<g stroke="#000" stroke-width="1.15" fill="none">
<rect x="219.5" y="440.5" width="469" height="181"/>
<path d="M214 621.5 H219.5 M208 599.5 H219.5 M214 580.5 H219.5 M208 562.5 H219.5 M214 545.5 H219.5 M208 529.5 H219.5 M214 514.5 H219.5 M208 500.5 H219.5 M214 487.5 H219.5 M208 474.5 H219.5 M214 462.5 H219.5 M208 451.5 H219.5 M220.5 621.5 V626.8 M238.5 621.5 V632.7 M256.5 621.5 V626.8 M274.5 621.5 V626.8 M292.5 621.5 V626.8 M310.5 621.5 V626.8 M328.5 621.5 V626.8 M346.5 621.5 V626.8 M364.5 621.5 V626.8 M382.5 621.5 V626.8 M400.5 621.5 V626.8 M418.5 621.5 V626.8 M436.5 621.5 V626.8 M454.5 621.5 V632.7 M472.5 621.5 V626.8 M490.5 621.5 V626.8 M508.5 621.5 V626.8 M526.5 621.5 V626.8 M544.5 621.5 V626.8 M562.5 621.5 V626.8 M580.5 621.5 V626.8 M598.5 621.5 V626.8 M616.5 621.5 V626.8 M634.5 621.5 V626.8 M652.5 621.5 V626.8 M670.5 621.5 V632.7 M688.5 621.5 V626.8"/>
</g>
<text x="202.3" y="457.239" text-anchor="end" xml:space="preserve"><tspan font-family="'DejaVu Sans', sans-serif" font-size="15.75">2.2</tspan></text>
<text x="202.3" y="480.545" text-anchor="end" xml:space="preserve"><tspan font-family="'DejaVu Sans', sans-serif" font-size="15.75">2.0</tspan></text>
<text x="202.3" y="506.309" text-anchor="end" xml:space="preserve"><tspan font-family="'DejaVu Sans', sans-serif" font-size="15.75">1.8</tspan></text>
<text x="202.3" y="535.11" text-anchor="end" xml:space="preserve"><tspan font-family="'DejaVu Sans', sans-serif" font-size="15.75">1.6</tspan></text>
<text x="202.3" y="567.763" text-anchor="end" xml:space="preserve"><tspan font-family="'DejaVu Sans', sans-serif" font-size="15.75">1.4</tspan></text>
<text x="202.3" y="605.457" text-anchor="end" xml:space="preserve"><tspan font-family="'DejaVu Sans', sans-serif" font-size="15.75">1.2</tspan></text>
<text x="0" y="0" text-anchor="middle" xml:space="preserve" transform="translate(166.4 531.3) rotate(-90)"><tspan font-family="'Liberation Sans', sans-serif" font-size="16.4">e</tspan><tspan font-family="'DejaVu Sans', sans-serif" font-size="15.75"> </tspan><tspan font-family="'Liberation Sans', sans-serif" font-size="16.4">Tperp</tspan><tspan font-family="'DejaVu Sans', sans-serif" font-size="15.75">/</tspan><tspan font-family="'Liberation Sans', sans-serif" font-size="16.4">Tpar</tspan></text>
<polyline points="238.1,487.2 238.2,499.2 238.3,487.1 238.4,496.6 238.5,488.6 238.6,488.4 238.7,509.1 238.9,505.4 239.0,515.1 239.1,497.0 239.2,500.0 239.3,500.7 239.4,513.4 239.5,505.2 239.7,502.4 239.8,487.1 239.9,497.0 240.0,517.7 240.1,500.3 240.2,496.4 240.4,513.3 240.5,507.9 240.6,490.1 240.7,488.0 240.8,510.2 240.9,506.3 241.0,500.5 241.2,503.3 241.3,505.2 241.4,507.2 241.5,521.1 241.6,514.8 241.7,500.9 241.8,505.5 242.0,514.9 242.1,515.8 242.2,510.7 242.3,515.0 242.4,506.2 242.5,523.3 242.7,517.0 242.8,505.0 242.9,513.6 243.0,517.6 243.1,512.8 243.2,516.2 243.3,514.8 243.5,523.0 243.6,522.0 243.7,514.0 243.8,517.4 243.9,519.4 244.0,516.6 244.1,520.8 244.3,522.0 244.4,531.2 244.5,528.8 244.6,519.4 244.7,517.9 244.8,529.9 245.0,523.3 245.1,527.9 245.2,508.6 245.3,515.6 245.4,532.0 245.5,518.5 245.6,525.5 245.8,522.5 245.9,524.2 246.0,523.5 246.1,521.2 246.2,515.0 246.3,528.8 246.4,519.7 246.6,531.2 246.7,525.2 246.8,522.6 246.9,527.1 247.0,523.2 247.1,526.0 247.3,535.5 247.4,536.3 247.5,523.2 247.6,526.2 247.7,537.4 247.8,516.2 247.9,514.9 248.1,513.7 248.2,520.1 248.3,533.7 248.4,529.2 248.5,516.8 248.6,529.6 248.7,537.5 248.9,539.1 249.0,527.3 249.1,520.3 249.2,528.9 249.3,526.1 249.4,530.6 249.6,524.2 249.7,523.7 249.8,532.3 249.9,535.4 250.0,535.3 250.1,536.0 250.2,545.0 250.4,538.8 250.5,521.2 250.6,535.6 250.7,525.9 250.8,533.0 250.9,531.0 251.0,531.3 251.2,528.6 251.3,530.1 251.4,531.3 251.5,530.1 251.6,539.0 251.7,544.2 251.9,540.5 252.0,524.8 252.1,529.7 252.2,535.4 252.3,540.3 252.4,546.4 252.5,528.4 252.7,531.8 252.8,536.3 252.9,532.8 253.0,531.9 253.1,544.4 253.2,546.4 253.3,536.3 253.5,532.2 253.6,532.4 253.7,546.5 253.8,534.6 253.9,538.8 254.0,538.3 254.2,536.4 254.3,535.6 254.4,552.6 254.5,540.4 254.6,537.8 254.7,551.7 254.8,547.1 255.0,545.4 255.1,542.1 255.2,543.5 255.3,544.6 255.4,541.3 255.5,545.8 255.6,546.7 255.8,548.9 255.9,539.9 256.0,548.1 256.1,546.2 256.2,545.5 256.3,554.8 256.5,551.5 256.6,544.1 256.7,554.7 256.8,542.0 256.9,555.6 257.0,549.8 257.1,546.4 257.3,543.1 257.4,546.1 257.5,557.5 257.6,552.9 257.7,552.5 257.8,563.9 257.9,552.4 258.1,558.7 258.2,559.0 258.3,552.2 258.4,556.5 258.5,558.1 258.6,548.9 258.8,559.7 258.9,556.7 259.0,551.9 259.1,556.8 259.2,552.4 259.3,552.6 259.4,562.6 259.6,558.0 259.7,549.9 259.8,555.7 259.9,558.6 260.0,562.3 260.1,562.3 260.2,555.3 260.4,552.0 260.5,553.6 260.6,558.9 260.7,560.0 260.8,561.5 260.9,560.5 261.1,553.6 261.2,557.3 261.3,559.3 261.4,557.3 261.5,560.2 261.6,555.9 261.7,551.9 261.9,566.7 262.0,558.1 262.1,558.9 262.2,562.1 262.3,556.7 262.4,559.8 262.5,560.7 262.7,557.3 262.8,558.0 262.9,561.7 263.0,560.9 263.1,559.8 263.2,562.1 263.4,560.0 263.5,562.2 263.6,563.0 263.7,556.8 263.8,558.4 263.9,560.3 264.0,565.7 264.2,554.8 264.3,556.4 264.4,557.5 264.5,563.1 264.6,562.7 264.7,561.1 264.8,561.3 265.0,557.2 265.1,560.0 265.2,559.9 265.3,556.5 265.4,566.3 265.5,559.0 265.7,562.3 265.8,559.1 265.9,560.5 266.0,561.4 266.1,560.7 266.2,562.1 266.3,561.9 266.5,562.0 266.6,555.8 266.7,567.2 266.8,564.8 266.9,559.5 267.0,554.7 267.1,557.9 267.3,566.0 267.4,564.4 267.5,564.4 267.6,562.1 267.7,558.9 267.8,563.4 268.0,560.2 268.1,565.4 268.2,562.9 268.3,568.3 268.4,558.0 268.5,561.9 268.6,560.6 268.8,567.1 268.9,561.6 269.0,567.3 269.1,565.7 269.2,563.1 269.3,565.4 269.4,564.6 269.6,567.1 269.7,564.8 269.8,565.7 269.9,565.1 270.0,568.1 270.1,564.1 270.3,568.6 270.4,569.2 270.5,565.5 270.6,564.2 270.7,568.8 270.8,569.2 270.9,564.6 271.1,567.5 271.2,567.0 271.3,572.2 271.4,568.9 271.5,570.5 271.6,563.5 271.7,568.3 271.9,568.2 272.0,562.8 272.1,567.6 272.2,568.6 272.3,564.6 272.4,567.8 272.6,570.1 272.7,572.5 272.8,571.1 272.9,570.5 273.0,570.1 273.1,567.5 273.2,571.2 273.4,567.0 273.5,568.1 273.6,574.1 273.7,567.3 273.8,571.9 273.9,571.8 274.0,571.3 274.2,569.5 274.3,568.0 274.4,572.1 274.5,576.1 274.6,570.2 274.7,565.6 274.9,567.5 275.0,575.8 275.1,570.2 275.2,566.9 275.3,574.9 275.4,569.6 275.5,570.2 275.7,575.2 275.8,571.9 275.9,575.5 276.0,569.1 276.1,574.5 276.2,573.6 276.3,567.8 276.5,575.3 276.6,578.3 276.7,577.2 276.8,573.4 276.9,578.3 277.0,571.7 277.2,566.4 277.3,571.1 277.4,572.5 277.5,564.8 277.6,577.2 277.7,578.3 277.8,574.5 278.0,579.9 278.1,570.5 278.2,575.5 278.3,568.5 278.4,573.6 278.5,576.9 278.6,571.4 278.8,577.8 278.9,567.8 279.0,579.0 279.1,572.1 279.2,574.9 279.3,569.7 279.5,573.0 279.6,564.6 279.7,574.9 279.8,577.7 279.9,576.9 280.0,575.0 280.1,574.2 280.3,571.4 280.4,566.6 280.5,569.5 280.6,569.3 280.7,571.1 280.8,566.1 280.9,577.0 281.1,579.2 281.2,571.9 281.3,576.8 281.4,570.4 281.5,570.5 281.6,568.4 281.8,571.9 281.9,575.9 282.0,581.3 282.1,573.2 282.2,582.8 282.3,577.5 282.4,578.0 282.6,571.9 282.7,577.3 282.8,571.5 282.9,580.6 283.0,570.4 283.1,570.9 283.2,571.1 283.4,575.6 283.5,576.8 283.6,577.0 283.7,577.1 283.8,579.1 283.9,570.3 284.1,566.4 284.2,573.0 284.3,580.7 284.4,578.4 284.5,571.9 284.6,573.9 284.7,573.6 284.9,575.7 285.0,573.4 285.1,570.4 285.2,570.6 285.3,577.0 285.4,573.8 285.5,573.6 285.7,574.6 285.8,564.8 285.9,577.5 286.0,578.9 286.1,580.8 286.2,572.1 286.4,575.6 286.5,577.8 286.6,573.4 286.7,578.7 286.8,572.6 286.9,575.3 287.0,572.2 287.2,582.7 287.3,576.6 287.4,575.6 287.5,572.6 287.6,574.9 287.7,567.8 287.8,573.5 288.0,571.0 288.1,582.7 288.2,570.8 288.3,580.8 288.4,570.6 288.5,573.3 288.7,568.8 288.8,575.9 288.9,573.3 289.0,575.8 289.1,570.3 289.2,573.0 289.3,568.2 289.5,573.4 289.6,580.7 289.7,573.8 289.8,580.2 289.9,574.9 290.0,569.3 290.1,574.5 290.3,576.3 290.4,571.3 290.5,573.4 290.6,570.6 290.7,582.9 290.8,577.7 291.0,577.0 291.1,571.4 291.2,580.6 291.3,574.0 291.4,572.0 291.5,575.9 291.6,569.4 291.8,575.1 291.9,576.3 292.0,573.8 292.1,579.0 292.2,570.3 292.3,581.9 292.4,577.7 292.6,572.5 292.7,575.9 292.8,581.4 292.9,576.4 293.0,569.3 293.1,576.9 293.3,581.9 293.4,567.5 293.5,571.8 293.6,583.3 293.7,570.5 293.8,565.6 293.9,577.6 294.1,572.1 294.2,583.9 294.3,575.3 294.4,569.5 294.5,575.6 294.6,580.7 294.7,566.7 294.9,573.5 295.0,582.4 295.1,580.8 295.2,578.8 295.3,581.2 295.4,568.2 295.6,574.8 295.7,568.0 295.8,574.7 295.9,576.9 296.0,575.9 296.1,573.0 296.2,565.4 296.4,567.5 296.5,572.7 296.6,569.9 296.7,566.6 296.8,568.5 296.9,566.9 297.0,573.6 297.2,573.6 297.3,574.8 297.4,570.7 297.5,577.0 297.6,563.4 297.7,557.1 297.9,567.9 298.0,578.1 298.1,563.2 298.2,574.8 298.3,556.7 298.4,570.4 298.5,566.0 298.7,559.6 298.8,570.0 298.9,569.3 299.0,559.4 299.1,563.2 299.2,560.4 299.3,562.2 299.5,564.7 299.6,559.9 299.7,558.7 299.8,556.2 299.9,571.1 300.0,565.4 300.2,557.3 300.3,558.4 300.4,547.6 300.5,570.5 300.6,558.3 300.7,558.1 300.8,566.1 301.0,561.1 301.1,555.9 301.2,557.0 301.3,546.7 301.4,545.1 301.5,548.4 301.6,550.5 301.8,551.9 301.9,549.2 302.0,554.0 302.1,550.6 302.2,551.3 302.3,551.9 302.5,559.6 302.6,556.0 302.7,548.4 302.8,549.3 302.9,541.9 303.0,543.4 303.1,544.5 303.3,550.8 303.4,552.6 303.5,554.5 303.6,548.9 303.7,552.2 303.8,554.1 303.9,549.6 304.1,548.8 304.2,543.0 304.3,547.9 304.4,554.8 304.5,557.9 304.6,553.4 304.8,555.3 304.9,541.2 305.0,549.1 305.1,550.9 305.2,563.5 305.3,545.4 305.4,558.3 305.6,549.9 305.7,554.5 305.8,546.7 305.9,546.4 306.0,563.3 306.1,555.1 306.2,557.3 306.4,540.5 306.5,546.5 306.6,556.2 306.7,561.1 306.8,550.3 306.9,552.8 307.1,554.3 307.2,542.3 307.3,544.2 307.4,546.7 307.5,549.5 307.6,549.5 307.7,550.5 307.9,552.8 308.0,547.3 308.1,547.6 308.2,545.0 308.3,549.0 308.4,560.5 308.5,555.4 308.7,553.0 308.8,562.9 308.9,555.6 309.0,547.5 309.1,552.2 309.2,564.1 309.4,548.3 309.5,549.6 309.6,556.4 309.7,556.7 309.8,552.2 309.9,548.6 310.0,550.0 310.2,556.8 310.3,549.9 310.4,554.6 310.5,554.6 310.6,558.3 310.7,563.1 310.8,564.8 311.0,566.0 311.1,558.2 311.2,567.0 311.3,562.2 311.4,564.8 311.5,564.8 311.7,558.4 311.8,568.3 311.9,547.9 312.0,560.6 312.1,562.2 312.2,571.6 312.3,556.1 312.5,567.3 312.6,568.7 312.7,556.7 312.8,564.3 312.9,558.6 313.0,570.0 313.1,569.8 313.3,555.6 313.4,569.4 313.5,574.0 313.6,561.8 313.7,562.7 313.8,570.9 314.0,554.2 314.1,555.4 314.2,572.1 314.3,561.0 314.4,559.8 314.5,567.3 314.6,568.3 314.8,554.0 314.9,564.1 315.0,555.6 315.1,565.2 315.2,569.2 315.3,566.2 315.4,565.8 315.6,566.3 315.7,564.1 315.8,563.0 315.9,557.9 316.0,576.2 316.1,567.5 316.3,567.9 316.4,568.4 316.5,561.7 316.6,556.2 316.7,559.4 316.8,569.7 316.9,558.6 317.1,569.4 317.2,573.8 317.3,552.1 317.4,558.6 317.5,570.8 317.6,568.1 317.7,562.8 317.9,557.9 318.0,564.4 318.1,559.8 318.2,566.4 318.3,563.0 318.4,567.4 318.6,567.8 318.7,567.7 318.8,556.9 318.9,552.7 319.0,553.0 319.1,552.5 319.2,547.2 319.4,555.3 319.5,552.8 319.6,556.5 319.7,546.3 319.8,556.2 319.9,560.8 320.0,549.9 320.2,540.6 320.3,546.6 320.4,553.1 320.5,538.8 320.6,537.2 320.7,550.1 320.9,544.6 321.0,539.6 321.1,542.6 321.2,540.3 321.3,533.6 321.4,545.8 321.5,545.9 321.7,537.5 321.8,540.1 321.9,547.5 322.0,539.1 322.1,541.7 322.2,550.9 322.3,549.9 322.5,542.2 322.6,538.0 322.7,528.8 322.8,542.5 322.9,528.8 323.0,533.7 323.2,546.7 323.3,531.1 323.4,539.8 323.5,522.7 323.6,544.6 323.7,529.6 323.8,535.1 324.0,531.6 324.1,532.2 324.2,536.8 324.3,529.1 324.4,538.5 324.5,532.6 324.6,516.5 324.8,519.2 324.9,518.6 325.0,524.9 325.1,532.6 325.2,522.9 325.3,534.4 325.5,531.9 325.6,524.4 325.7,526.6 325.8,522.5 325.9,524.5 326.0,522.4 326.1,514.3 326.3,529.6 326.4,511.7 326.5,520.9 326.6,519.6 326.7,531.3 326.8,510.4 326.9,528.1 327.1,521.0 327.2,518.4 327.3,525.4 327.4,519.3 327.5,523.4 327.6,520.1 327.8,517.8 327.9,516.9 328.0,523.8 328.1,513.5 328.2,526.1 328.3,524.9 328.4,515.6 328.6,513.5 328.7,512.5 328.8,527.2 328.9,511.6 329.0,513.2 329.1,505.3 329.2,519.3 329.4,514.8 329.5,504.6 329.6,525.8 329.7,525.7 329.8,518.7 329.9,508.8 330.1,516.1 330.2,508.7 330.3,518.9 330.4,507.7 330.5,507.0 330.6,514.4 330.7,510.8 330.9,519.5 331.0,513.0 331.1,504.7 331.2,516.8 331.3,502.3 331.4,511.0 331.5,506.2 331.7,514.9 331.8,510.2 331.9,511.5 332.0,510.9 332.1,496.9 332.2,497.4 332.4,509.6 332.5,516.3 332.6,509.7 332.7,521.5 332.8,515.4 332.9,488.9 333.0,506.7 333.2,515.6 333.3,507.8 333.4,502.2 333.5,481.6 333.6,493.5 333.7,492.8 333.8,502.7 334.0,489.3 334.1,487.7 334.2,483.1 334.3,496.0 334.4,490.0 334.5,484.1 334.7,495.8 334.8,483.0 334.9,465.0 335.0,493.4 335.1,476.5 335.2,477.7 335.3,481.2 335.5,493.5 335.6,475.8 335.7,465.0 335.8,496.0 335.9,497.9 336.0,471.7 336.1,498.8 336.3,479.1 336.4,482.9 336.5,478.7 336.6,492.7 336.7,474.9 336.8,468.3 337.0,481.0 337.1,496.2 337.2,469.9 337.3,474.2 337.4,475.8 337.5,499.7 337.6,492.8 337.8,489.6 337.9,486.3 338.0,484.7 338.1,486.7 338.2,493.8 338.3,494.9 338.4,493.1 338.6,490.3 338.7,484.2 338.8,491.7 338.9,510.6 339.0,492.7 339.1,490.2 339.3,487.5 339.4,490.8 339.5,487.5 339.6,491.8 339.7,500.6 339.8,497.4 339.9,492.3 340.1,500.8 340.2,482.1 340.3,495.4 340.4,505.1 340.5,502.1 340.6,484.0 340.7,491.0 340.9,474.4 341.0,490.5 341.1,491.8 341.2,484.5 341.3,484.6 341.4,497.9 341.6,493.6 341.7,478.5 341.8,494.8 341.9,502.4 342.0,497.0 342.1,489.3 342.2,507.5 342.4,510.1 342.5,488.2 342.6,488.2 342.7,505.1 342.8,500.0 342.9,490.8 343.0,496.2 343.2,496.7 343.3,499.2 343.4,508.5 343.5,480.7 343.6,508.9 343.7,482.4 343.9,488.8 344.0,484.4 344.1,486.0 344.2,476.4 344.3,496.2 344.4,492.9 344.5,481.6 344.7,504.5 344.8,497.8 344.9,471.5 345.0,499.7 345.1,496.2 345.2,471.3 345.3,496.4 345.5,488.0 345.6,487.2 345.7,481.2 345.8,480.7 345.9,508.7 346.0,490.6 346.2,502.1 346.3,487.3 346.4,506.9 346.5,483.7 346.6,470.7 346.7,490.7 346.8,480.0 347.0,485.9 347.1,488.7 347.2,487.0 347.3,480.9 347.4,484.6 347.5,498.2 347.6,483.6 347.8,477.5 347.9,494.1 348.0,509.9 348.1,481.7 348.2,486.6 348.3,479.9 348.5,480.3 348.6,490.6 348.7,472.8 348.8,484.5 348.9,497.3 349.0,480.1 349.1,478.2 349.3,497.4 349.4,491.0 349.5,496.8 349.6,489.2 349.7,502.6 349.8,497.7 349.9,489.1 350.1,498.9 350.2,494.6 350.3,487.9 350.4,495.3 350.5,487.4 350.6,488.3 350.8,506.5 350.9,498.0 351.0,488.8 351.1,499.7 351.2,497.1 351.3,506.2 351.4,509.6 351.6,489.0 351.7,502.8 351.8,506.3 351.9,499.5 352.0,505.9 352.1,488.7 352.2,491.7 352.4,499.4 352.5,507.8 352.6,501.0 352.7,515.8 352.8,520.9 352.9,507.9 353.1,491.8 353.2,516.8 353.3,520.3 353.4,515.4 353.5,503.0 353.6,494.9 353.7,492.6 353.9,515.2 354.0,493.6 354.1,510.4 354.2,504.0 354.3,503.3 354.4,521.6 354.5,516.4 354.7,491.4 354.8,502.1 354.9,508.0 355.0,517.0 355.1,520.0 355.2,522.2 355.4,540.3 355.5,508.7 355.6,497.5 355.7,521.8 355.8,493.7 355.9,497.0 356.0,521.3 356.2,494.4 356.3,514.6 356.4,530.0 356.5,548.7 356.6,517.3 356.7,525.2 356.8,523.2 357.0,519.0 357.1,512.0 357.2,539.6 357.3,507.9 357.4,519.9 357.5,556.5 357.7,538.3 357.8,547.2 357.9,532.9 358.0,533.0 358.1,540.9 358.2,550.3 358.3,544.4 358.5,553.6 358.6,554.8 358.7,550.9 358.8,543.0 358.9,561.9 359.0,555.9 359.1,561.3 359.3,562.3 359.4,557.7 359.5,553.8 359.6,574.4 359.7,561.9 359.8,569.8 360.0,567.8 360.1,561.1 360.2,568.6 360.3,572.8 360.4,568.3" fill="none" stroke="#000" stroke-width="0.95" stroke-linejoin="round"/>
<polyline points="372.8,549.2 373.0,544.4 373.1,543.4 373.2,536.2 373.3,543.0 373.4,526.9 373.5,525.6 373.6,534.6 373.8,524.5 373.9,523.5 374.0,514.6 374.1,530.1 374.2,504.9 374.3,514.4 374.5,514.1 374.6,509.8 374.7,508.7 374.8,505.6 374.9,492.0 375.0,489.7 375.1,511.1 375.3,490.6 375.4,494.0 375.5,498.8 375.6,498.4 375.7,492.0 375.8,481.1 375.9,491.4 376.1,493.8 376.2,498.9 376.3,485.8 376.4,483.9 376.5,487.0 376.6,479.0 376.8,492.1 376.9,496.2 377.0,505.4 377.1,488.6 377.2,491.5 377.3,490.8 377.4,488.6 377.6,502.7 377.7,487.1 377.8,495.0 377.9,490.5 378.0,477.8 378.1,490.8 378.2,496.7 378.4,481.8 378.5,481.8 378.6,490.5 378.7,503.2 378.8,482.5 378.9,470.2 379.1,487.4 379.2,487.6 379.3,482.8 379.4,494.7 379.5,486.4 379.6,482.6 379.7,496.9 379.9,504.0 380.0,487.7 380.1,494.3 380.2,479.8 380.3,486.5 380.4,502.1 380.5,487.7 380.7,490.7 380.8,493.2 380.9,489.5 381.0,486.4 381.1,490.2 381.2,492.0 381.4,493.6 381.5,498.2 381.6,482.8 381.7,484.3 381.8,499.1 381.9,487.0 382.0,481.5 382.2,494.4 382.3,493.8 382.4,494.8 382.5,469.4 382.6,480.2 382.7,478.1 382.8,501.7 383.0,470.9 383.1,485.1 383.2,494.5 383.3,487.6 383.4,480.3 383.5,486.2 383.7,474.2 383.8,504.2 383.9,494.1 384.0,477.7 384.1,469.4 384.2,491.1 384.3,484.4 384.5,489.9 384.6,491.9 384.7,491.0 384.8,485.6 384.9,502.9 385.0,486.6 385.1,480.7 385.3,489.6 385.4,499.6 385.5,487.1 385.6,483.1 385.7,476.7 385.8,483.1 386.0,489.8 386.1,475.6 386.2,489.9 386.3,473.7 386.4,485.5 386.5,485.0 386.6,479.1 386.8,480.8 386.9,468.2 387.0,484.9 387.1,475.0 387.2,472.7 387.3,477.2 387.4,484.9 387.6,487.3 387.7,476.1 387.8,468.6 387.9,473.2 388.0,465.0 388.1,452.0 388.3,477.8 388.4,480.3 388.5,475.9 388.6,479.1 388.7,478.7 388.8,457.9 388.9,478.8 389.1,486.3 389.2,476.0 389.3,470.1 389.4,472.8 389.5,468.4 389.6,474.5 389.7,460.9 389.9,475.8 390.0,481.4 390.1,481.6 390.2,466.4 390.3,476.4 390.4,476.8 390.6,495.1 390.7,471.9 390.8,486.9 390.9,472.5 391.0,473.0 391.1,469.8 391.2,484.3 391.4,466.2 391.5,497.4 391.6,470.0 391.7,492.0 391.8,479.3 391.9,459.6 392.0,470.2 392.2,491.2 392.3,460.4 392.4,478.4 392.5,497.8 392.6,488.1 392.7,481.3 392.9,482.5 393.0,496.6 393.1,513.4 393.2,499.0 393.3,467.9 393.4,484.6 393.5,468.7 393.7,490.3 393.8,512.2 393.9,498.8 394.0,490.6 394.1,485.1 394.2,458.0 394.3,472.5 394.5,483.6 394.6,499.3 394.7,472.7 394.8,476.8 394.9,484.3 395.0,454.7 395.2,472.4 395.3,466.1 395.4,490.3 395.5,468.3 395.6,457.4 395.7,469.8 395.8,490.5 396.0,452.9 396.1,477.5 396.2,444.1 396.3,447.3 396.4,490.5 396.5,469.3 396.6,464.4 396.8,454.7 396.9,472.7 397.0,482.3 397.1,476.8 397.2,460.9 397.3,474.5 397.5,480.9 397.6,483.4 397.7,473.5 397.8,485.7 397.9,457.9 398.0,467.8 398.1,488.6 398.3,482.1 398.4,473.3 398.5,477.9 398.6,476.1 398.7,485.3 398.8,470.5 398.9,488.0 399.1,482.8 399.2,483.0 399.3,464.2 399.4,486.6 399.5,483.6 399.6,466.8 399.8,477.5 399.9,499.4 400.0,489.8 400.1,486.1 400.2,488.3 400.3,488.0 400.4,493.9 400.6,487.2 400.7,476.3 400.8,488.0 400.9,478.0 401.0,466.6 401.1,472.6 401.2,484.1 401.4,492.4 401.5,494.6 401.6,488.3 401.7,495.5 401.8,481.7 401.9,490.0 402.1,485.7 402.2,476.7 402.3,481.5 402.4,495.1 402.5,493.9 402.6,485.6 402.7,487.2 402.9,497.6 403.0,485.5 403.1,492.3 403.2,476.5 403.3,505.5 403.4,487.6 403.5,500.4 403.7,493.1 403.8,489.4 403.9,498.2 404.0,498.1 404.1,471.4 404.2,501.6 404.4,490.3 404.5,489.7 404.6,496.1 404.7,472.1 404.8,486.7 404.9,491.3 405.0,484.7 405.2,488.1 405.3,478.3 405.4,489.1 405.5,474.7 405.6,495.6 405.7,475.4 405.8,491.0 406.0,491.0 406.1,485.6 406.2,504.7 406.3,486.2 406.4,504.2 406.5,491.8 406.7,493.8 406.8,478.7 406.9,502.1 407.0,483.8 407.1,482.8 407.2,489.9 407.3,490.8 407.5,493.8 407.6,493.4 407.7,482.7 407.8,483.8 407.9,483.3 408.0,475.4 408.1,486.8 408.3,488.9 408.4,493.1 408.5,493.3 408.6,485.3 408.7,490.9 408.8,486.3 409.0,489.7 409.1,491.5 409.2,484.3 409.3,486.3 409.4,483.4 409.5,489.7 409.6,478.2 409.8,479.7 409.9,488.5 410.0,497.3 410.1,491.2 410.2,477.9 410.3,496.9 410.4,482.1 410.6,497.1 410.7,482.3 410.8,493.4 410.9,494.4 411.0,473.5 411.1,482.5 411.3,487.8 411.4,490.4 411.5,487.7 411.6,485.1 411.7,476.7 411.8,485.2 411.9,484.5 412.1,476.3 412.2,472.3 412.3,478.8 412.4,484.2 412.5,475.9 412.6,478.3 412.7,482.1 412.9,472.3 413.0,485.0 413.1,495.1 413.2,470.2 413.3,471.6 413.4,486.4 413.6,493.2 413.7,470.3 413.8,483.2 413.9,495.8 414.0,484.8 414.1,474.3 414.2,485.1 414.4,479.7 414.5,486.9 414.6,484.3 414.7,478.3 414.8,488.3 414.9,471.6 415.0,486.4 415.2,487.2 415.3,485.1 415.4,478.4 415.5,499.3 415.6,487.7 415.7,486.7 415.9,493.9 416.0,495.7 416.1,490.7 416.2,477.5 416.3,481.8 416.4,496.3 416.5,493.8 416.7,482.4 416.8,495.4 416.9,486.2 417.0,485.8 417.1,486.4 417.2,495.9 417.3,491.7 417.5,496.9 417.6,493.6 417.7,488.7 417.8,487.0 417.9,495.7 418.0,490.8 418.2,488.7 418.3,488.3 418.4,506.3 418.5,486.4 418.6,480.2 418.7,489.5 418.8,484.4 419.0,484.3 419.1,495.2 419.2,498.0 419.3,500.1 419.4,479.7 419.5,487.3 419.6,501.9 419.8,503.4 419.9,491.1 420.0,489.3 420.1,508.0 420.2,498.4 420.3,506.8 420.5,490.8 420.6,495.1 420.7,489.8 420.8,488.8 420.9,495.4 421.0,492.9 421.1,492.6 421.3,490.5 421.4,491.0 421.5,495.6 421.6,493.4 421.7,480.1 421.8,490.8 421.9,490.1 422.1,493.9 422.2,496.3 422.3,490.0 422.4,495.1 422.5,489.0 422.6,502.5 422.8,507.4 422.9,492.6 423.0,501.6 423.1,494.3 423.2,495.0 423.3,488.7 423.4,490.0 423.6,504.2 423.7,496.4 423.8,492.5 423.9,501.3 424.0,490.5 424.1,508.5 424.2,502.0 424.4,493.1 424.5,497.5 424.6,501.6 424.7,496.9 424.8,505.2 424.9,490.3 425.1,488.8 425.2,499.8 425.3,495.0 425.4,495.4 425.5,500.7 425.6,513.2 425.7,511.6 425.9,513.2 426.0,491.8 426.1,497.2 426.2,507.7 426.3,506.7 426.4,507.4 426.5,505.0 426.7,505.0 426.8,496.7 426.9,494.7 427.0,499.4 427.1,506.6 427.2,487.4 427.4,504.8 427.5,505.8 427.6,508.2 427.7,499.4 427.8,492.3 427.9,503.1 428.0,499.4 428.2,510.6 428.3,515.7 428.4,494.2 428.5,504.1 428.6,496.4 428.7,513.6 428.8,504.3 429.0,501.1 429.1,494.9 429.2,497.8 429.3,504.9 429.4,509.7 429.5,505.8 429.7,505.3 429.8,502.9 429.9,503.1 430.0,500.8 430.1,506.0 430.2,508.2 430.3,513.1 430.5,504.6 430.6,506.8 430.7,514.8 430.8,495.9 430.9,501.1 431.0,507.5 431.1,505.0 431.3,497.4 431.4,499.3 431.5,508.9 431.6,500.3 431.7,511.1 431.8,490.2 432.0,507.8 432.1,505.0 432.2,509.7 432.3,512.2 432.4,511.2 432.5,500.0 432.6,500.4 432.8,494.3 432.9,507.8 433.0,508.0 433.1,502.8 433.2,514.2 433.3,510.6 433.4,506.7 433.6,505.8 433.7,509.1 433.8,506.3 433.9,514.3 434.0,511.1 434.1,505.5 434.3,511.1 434.4,499.8 434.5,501.6 434.6,505.0 434.7,503.0 434.8,506.6 434.9,498.7 435.1,499.1 435.2,507.7 435.3,497.9 435.4,507.3 435.5,504.0 435.6,509.7 435.7,500.1 435.9,509.6 436.0,505.5 436.1,515.7 436.2,505.6 436.3,515.8 436.4,505.5 436.6,504.9 436.7,499.2 436.8,507.8 436.9,509.8 437.0,508.3 437.1,514.3 437.2,502.9 437.4,499.8 437.5,519.4 437.6,490.2 437.7,503.0 437.8,508.5 437.9,497.8 438.0,490.5 438.2,502.9 438.3,513.6 438.4,498.3 438.5,507.9 438.6,498.7 438.7,497.7 438.9,511.9 439.0,498.8 439.1,508.9 439.2,504.2 439.3,502.5 439.4,509.2 439.5,512.7 439.7,506.3 439.8,501.8 439.9,507.8 440.0,511.1 440.1,490.8 440.2,509.4 440.3,511.8 440.5,501.1 440.6,502.4 440.7,514.7 440.8,520.9 440.9,504.2 441.0,508.0 441.2,507.2 441.3,498.1 441.4,503.0 441.5,502.0 441.6,503.3 441.7,506.4 441.8,489.2 442.0,504.6 442.1,501.1 442.2,509.8 442.3,519.5 442.4,508.3 442.5,496.6 442.6,510.9 442.8,493.4 442.9,503.3 443.0,496.5 443.1,494.7 443.2,507.2 443.3,497.6 443.5,510.8 443.6,501.8 443.7,492.1 443.8,494.2 443.9,506.5 444.0,510.0 444.1,503.5 444.3,504.5 444.4,509.8 444.5,502.6 444.6,501.9 444.7,502.0 444.8,494.3 444.9,511.2 445.1,506.8 445.2,510.6 445.3,497.7 445.4,513.6 445.5,499.6 445.6,510.9 445.8,503.1 445.9,515.0 446.0,498.4 446.1,492.2 446.2,495.5 446.3,489.5 446.4,515.9 446.6,509.6 446.7,505.2 446.8,508.0 446.9,496.6 447.0,508.4 447.1,506.3 447.2,495.7 447.4,496.0 447.5,499.0 447.6,509.1 447.7,496.1 447.8,512.7 447.9,498.6 448.1,507.4 448.2,504.4 448.3,491.6 448.4,500.4 448.5,508.2 448.6,512.2 448.7,509.3 448.9,504.1 449.0,500.1 449.1,498.8 449.2,506.3 449.3,492.1 449.4,491.5 449.5,500.1 449.7,510.9 449.8,517.1 449.9,492.3 450.0,502.7 450.1,514.5 450.2,505.5 450.4,504.3 450.5,492.2 450.6,495.4 450.7,505.7 450.8,513.3 450.9,488.3 451.0,499.9 451.2,500.3 451.3,492.2 451.4,496.0 451.5,498.5 451.6,498.3 451.7,514.3 451.8,487.3 452.0,504.0 452.1,498.8 452.2,499.4 452.3,493.6 452.4,494.4 452.5,500.6 452.7,513.3 452.8,492.8 452.9,503.9 453.0,502.1 453.1,505.8 453.2,493.4 453.3,493.6 453.5,493.2 453.6,510.4 453.7,496.3 453.8,506.0 453.9,499.9 454.0,505.7 454.1,498.8 454.3,512.8 454.4,499.0 454.5,495.9 454.6,500.2 454.7,493.3 454.8,499.2 455.0,498.9 455.1,502.8 455.2,502.5 455.3,489.3 455.4,493.6 455.5,500.3 455.6,501.3 455.8,497.6 455.9,490.2 456.0,486.1 456.1,505.7 456.2,488.0 456.3,487.2 456.4,493.2 456.6,495.3 456.7,497.9 456.8,491.9 456.9,499.9 457.0,479.9 457.1,507.0 457.3,491.5 457.4,492.5 457.5,486.6 457.6,488.2 457.7,489.9 457.8,492.8 457.9,481.0 458.1,496.0 458.2,476.6 458.3,501.5 458.4,493.4 458.5,486.6 458.6,496.6 458.7,489.0 458.9,471.7 459.0,485.8 459.1,485.9 459.2,483.1 459.3,487.3 459.4,484.1 459.6,488.0 459.7,486.5 459.8,472.3 459.9,501.6 460.0,493.4 460.1,494.4 460.2,496.3 460.4,497.0 460.5,494.1 460.6,478.6 460.7,481.1 460.8,488.9 460.9,506.0 461.0,490.5 461.2,490.7 461.3,502.8 461.4,478.4 461.5,502.6 461.6,496.6 461.7,481.5 461.9,499.5 462.0,486.6 462.1,501.7 462.2,497.9 462.3,500.9 462.4,495.5 462.5,487.8 462.7,497.1 462.8,484.5 462.9,484.4 463.0,507.2 463.1,509.2 463.2,502.2 463.3,500.8 463.5,496.4 463.6,489.5 463.7,514.7 463.8,512.0 463.9,500.9 464.0,496.8 464.2,499.7 464.3,503.6 464.4,514.8 464.5,504.6 464.6,506.5 464.7,510.6 464.8,497.5 465.0,494.9 465.1,502.4 465.2,506.7 465.3,510.5 465.4,512.7 465.5,504.7 465.6,502.3 465.8,508.4 465.9,508.1 466.0,513.6 466.1,515.8 466.2,512.2 466.3,499.0 466.5,501.5 466.6,505.6 466.7,516.5 466.8,507.3 466.9,498.3 467.0,496.0 467.1,504.8 467.3,497.4 467.4,514.3 467.5,527.0 467.6,503.1 467.7,504.0 467.8,492.9 467.9,498.1 468.1,514.9 468.2,499.1 468.3,506.8 468.4,504.9 468.5,499.8 468.6,506.0 468.8,511.4 468.9,519.2 469.0,525.1 469.1,515.7 469.2,519.6 469.3,512.1 469.4,511.0 469.6,501.2 469.7,515.4 469.8,506.7 469.9,518.7 470.0,503.5 470.1,510.1 470.2,506.7 470.4,508.3 470.5,511.2 470.6,522.5 470.7,507.2 470.8,505.4 470.9,513.9 471.1,521.6 471.2,511.7 471.3,524.3 471.4,515.3 471.5,507.8 471.6,510.3 471.7,519.0 471.9,511.2 472.0,508.0 472.1,519.9 472.2,507.5 472.3,503.8 472.4,512.7 472.5,514.1 472.7,495.9 472.8,532.9 472.9,502.5 473.0,522.0 473.1,520.1 473.2,510.7 473.4,506.1 473.5,503.5 473.6,504.1 473.7,523.6 473.8,514.7 473.9,510.5 474.0,503.4 474.2,518.8 474.3,522.4 474.4,521.1 474.5,514.3 474.6,527.3 474.7,511.9 474.8,495.9 475.0,527.3 475.1,510.1 475.2,511.3 475.3,511.2 475.4,508.4 475.5,506.2 475.7,520.2 475.8,495.8 475.9,488.5 476.0,494.3 476.1,502.8 476.2,505.5 476.3,518.6 476.5,499.8 476.6,504.2 476.7,511.9 476.8,501.0 476.9,490.8 477.0,507.2 477.1,511.1 477.3,510.7 477.4,498.4 477.5,510.8 477.6,501.9 477.7,500.5 477.8,508.8 478.0,511.0 478.1,500.7 478.2,510.9 478.3,487.6 478.4,505.9 478.5,493.3 478.6,499.3 478.8,485.9 478.9,500.1 479.0,502.8 479.1,514.1 479.2,511.9 479.3,500.3 479.4,499.7 479.6,496.7 479.7,500.4 479.8,494.2 479.9,492.5 480.0,494.5 480.1,504.1 480.3,509.5 480.4,494.2 480.5,493.4 480.6,506.5 480.7,493.4 480.8,507.9 480.9,490.0 481.1,502.0 481.2,505.7 481.3,494.9 481.4,496.1 481.5,503.3 481.6,509.9 481.7,500.9 481.9,510.2 482.0,495.8 482.1,495.3 482.2,502.2 482.3,488.0 482.4,502.3 482.6,501.1 482.7,498.2 482.8,523.6 482.9,494.6 483.0,505.0 483.1,519.0 483.2,514.5 483.4,519.9 483.5,525.2 483.6,499.6 483.7,509.1 483.8,521.8 483.9,504.1 484.0,511.4 484.2,501.3 484.3,515.9 484.4,495.9 484.5,507.1 484.6,510.7 484.7,498.8 484.9,508.5 485.0,532.6 485.1,524.6 485.2,526.4 485.3,519.3 485.4,515.7 485.5,520.4 485.7,516.0 485.8,519.1 485.9,510.5 486.0,530.5 486.1,518.1 486.2,517.7 486.3,531.7 486.5,534.0 486.6,543.6 486.7,528.1 486.8,520.9 486.9,535.1 487.0,528.9 487.2,542.4 487.3,534.2 487.4,541.2 487.5,537.8 487.6,528.0 487.7,536.5 487.8,538.6 488.0,523.7 488.1,538.5 488.2,542.4 488.3,530.3 488.4,537.8 488.5,505.4 488.6,532.2 488.8,533.3 488.9,501.9 489.0,531.0 489.1,510.6 489.2,537.9 489.3,504.9 489.5,514.1 489.6,509.7 489.7,527.9 489.8,513.4 489.9,511.2 490.0,512.2 490.1,518.6 490.3,523.3 490.4,514.0 490.5,523.3 490.6,518.9 490.7,503.3 490.8,510.4 490.9,492.7 491.1,507.6 491.2,515.5 491.3,513.6 491.4,525.8 491.5,516.7 491.6,493.7 491.8,503.2 491.9,512.9 492.0,517.9 492.1,513.7 492.2,508.3 492.3,499.1 492.4,507.0 492.6,487.1 492.7,514.3 492.8,507.0 492.9,497.9 493.0,511.2 493.1,487.7 493.2,502.0 493.4,501.7 493.5,496.9 493.6,489.3 493.7,511.4 493.8,491.8 493.9,524.6 494.1,499.8 494.2,492.5 494.3,502.2 494.4,503.3 494.5,492.7 494.6,514.0 494.7,493.9 494.9,494.5 495.0,495.1 495.1,507.5 495.2,486.3 495.3,507.6 495.4,496.1 495.5,518.0 495.7,495.7 495.8,510.2 495.9,496.3 496.0,502.9 496.1,505.4 496.2,505.1 496.4,493.4 496.5,502.7 496.6,513.6 496.7,501.6 496.8,502.1 496.9,492.8 497.0,481.7 497.2,510.1 497.3,504.8 497.4,496.4 497.5,499.2 497.6,496.9 497.7,474.4 497.8,489.6 498.0,488.9 498.1,493.1 498.2,488.1 498.3,481.9 498.4,505.9 498.5,505.4 498.7,474.5 498.8,493.1 498.9,484.2 499.0,498.8 499.1,501.7 499.2,505.0 499.3,504.6 499.5,475.0 499.6,484.3 499.7,501.5 499.8,492.3 499.9,486.9 500.0,501.1 500.1,473.5 500.3,493.3 500.4,472.2 500.5,498.2 500.6,487.0 500.7,492.6 500.8,511.1 501.0,489.3 501.1,493.4 501.2,498.1 501.3,484.3 501.4,476.8 501.5,514.8 501.6,477.4 501.8,505.3 501.9,478.1 502.0,492.5 502.1,497.6 502.2,490.3 502.3,493.7 502.4,502.5 502.6,496.3 502.7,516.7 502.8,494.4 502.9,488.7 503.0,488.1 503.1,496.3 503.3,497.3 503.4,515.1 503.5,493.0 503.6,497.0 503.7,485.9 503.8,478.2 503.9,514.1 504.1,491.2 504.2,505.7 504.3,490.5 504.4,493.7 504.5,494.9 504.6,498.3 504.7,499.2 504.9,495.2 505.0,494.6 505.1,486.3 505.2,496.3 505.3,487.7 505.4,500.1 505.6,497.4 505.7,486.3 505.8,488.8 505.9,492.6 506.0,483.5 506.1,502.2 506.2,497.8 506.4,488.5 506.5,490.7 506.6,510.8 506.7,485.7 506.8,485.7 506.9,495.7 507.0,506.2 507.2,500.3 507.3,481.1 507.4,490.5 507.5,485.9 507.6,502.6 507.7,485.3 507.9,491.6 508.0,505.2 508.1,500.0 508.2,497.6 508.3,493.0 508.4,493.3 508.5,498.1 508.7,490.3 508.8,468.4 508.9,493.1 509.0,470.2 509.1,476.0 509.2,478.1 509.3,485.6 509.5,491.2 509.6,480.3 509.7,481.3 509.8,497.9 509.9,501.2 510.0,488.7 510.2,496.5 510.3,494.3 510.4,480.4 510.5,472.7 510.6,481.1 510.7,488.6 510.8,476.8 511.0,494.9 511.1,496.3 511.2,483.6 511.3,487.5 511.4,497.3 511.5,489.9 511.6,486.5 511.8,489.0 511.9,497.5 512.0,471.3 512.1,484.8 512.2,491.0 512.3,494.6 512.5,502.4 512.6,501.9 512.7,510.1 512.8,484.3 512.9,514.4 513.0,488.4 513.1,496.3 513.3,494.7 513.4,495.3 513.5,500.1 513.6,519.8 513.7,522.8 513.8,490.9 513.9,506.1 514.1,515.7 514.2,489.7 514.3,497.0 514.4,515.2 514.5,507.0 514.6,507.0 514.8,517.0 514.9,513.9 515.0,509.6 515.1,524.9 515.2,507.0 515.3,514.7 515.4,518.1 515.6,514.4 515.7,515.6 515.8,520.8 515.9,521.1 516.0,530.3 516.1,510.2 516.2,503.1 516.4,514.1 516.5,522.3 516.6,496.1 516.7,514.1 516.8,513.5 516.9,515.9 517.1,512.8 517.2,510.0 517.3,522.3 517.4,504.0 517.5,500.3 517.6,528.9 517.7,529.7 517.9,510.1 518.0,513.7 518.1,528.6 518.2,530.3 518.3,525.5 518.4,506.8 518.5,525.7 518.7,535.6 518.8,547.4 518.9,524.3 519.0,523.4 519.1,526.6 519.2,510.1 519.4,534.5 519.5,522.1 519.6,529.9 519.7,539.6 519.8,533.2 519.9,527.4 520.0,528.7 520.2,539.1 520.3,525.7 520.4,518.3 520.5,540.9 520.6,544.1 520.7,539.9 520.8,546.3 521.0,527.1 521.1,543.7 521.2,549.0 521.3,522.9 521.4,529.7 521.5,542.1 521.7,531.9 521.8,556.9 521.9,552.4 522.0,546.1 522.1,560.4" fill="none" stroke="#000" stroke-width="0.95" stroke-linejoin="round"/>
<polyline points="534.2,572.9 534.3,575.9 534.5,566.6 534.6,566.3 534.7,569.9 534.8,568.1 534.9,555.0 535.0,561.7 535.1,570.2 535.3,554.4 535.4,570.9 535.5,555.2 535.6,541.9 535.7,545.9 535.8,550.2 536.0,536.0 536.1,536.7 536.2,546.3 536.3,559.6 536.4,536.5 536.5,541.5 536.6,535.7 536.8,539.8 536.9,535.3 537.0,518.2 537.1,535.1 537.2,532.2 537.3,521.9 537.4,532.4 537.6,512.6 537.7,523.3 537.8,514.6 537.9,505.9 538.0,532.8 538.1,509.6 538.3,522.6 538.4,519.8 538.5,513.9 538.6,515.3 538.7,516.5 538.8,511.4 538.9,503.4 539.1,527.7 539.2,522.2 539.3,526.9 539.4,506.4 539.5,502.7 539.6,515.2 539.7,534.4 539.9,507.4 540.0,506.2 540.1,489.0 540.2,501.5 540.3,506.5 540.4,505.7 540.6,509.6 540.7,519.5 540.8,498.4 540.9,519.4 541.0,507.5 541.1,489.9 541.2,500.5 541.4,502.6 541.5,519.7 541.6,490.3 541.7,502.2 541.8,480.7 541.9,490.8 542.0,486.6 542.2,508.2 542.3,480.6 542.4,519.7 542.5,468.7 542.6,483.7 542.7,508.4 542.9,484.5 543.0,480.1 543.1,481.6 543.2,502.5 543.3,498.4 543.4,507.0 543.5,474.9 543.7,471.5 543.8,477.0 543.9,489.2 544.0,487.8 544.1,501.0 544.2,506.0 544.3,495.7 544.5,487.5 544.6,507.8 544.7,510.0 544.8,501.9 544.9,485.3 545.0,497.9 545.2,497.6 545.3,500.6 545.4,469.7 545.5,467.4 545.6,488.8 545.7,482.3 545.8,483.6 546.0,504.0 546.1,491.2 546.2,483.9 546.3,487.1 546.4,464.2 546.5,485.3 546.6,489.8 546.8,466.8 546.9,472.3 547.0,495.0 547.1,495.1 547.2,466.3 547.3,465.1 547.5,503.1 547.6,483.0 547.7,475.8 547.8,494.9 547.9,472.8 548.0,479.2 548.1,484.0 548.3,492.3 548.4,490.7 548.5,494.8 548.6,494.7 548.7,486.8 548.8,463.7 548.9,477.9 549.1,482.7 549.2,486.1 549.3,464.1 549.4,488.6 549.5,478.2 549.6,480.5 549.8,474.3 549.9,472.9 550.0,494.6 550.1,493.4 550.2,480.7 550.3,483.2 550.4,483.4 550.6,481.8 550.7,487.9 550.8,490.8 550.9,485.3 551.0,489.6 551.1,485.7 551.2,498.1 551.4,493.5 551.5,480.5 551.6,488.0 551.7,476.0 551.8,511.7 551.9,491.3 552.1,492.5 552.2,487.6 552.3,493.2 552.4,511.4 552.5,508.7 552.6,492.0 552.7,504.4 552.9,513.5 553.0,478.9 553.1,487.7 553.2,521.5 553.3,494.2 553.4,521.5 553.5,492.1 553.7,508.8 553.8,516.1 553.9,523.6 554.0,512.2 554.1,504.0 554.2,525.2 554.4,509.9 554.5,518.3 554.6,492.3 554.7,511.7 554.8,519.1 554.9,490.2 555.0,521.1 555.2,525.1 555.3,533.9 555.4,507.3 555.5,519.9 555.6,532.6 555.7,524.4 555.8,502.3 556.0,525.7 556.1,511.9 556.2,513.2 556.3,526.3 556.4,533.6 556.5,532.9 556.7,546.5 556.8,519.0 556.9,523.3 557.0,525.6 557.1,523.8 557.2,516.1 557.3,514.3 557.5,550.3 557.6,536.1 557.7,526.7 557.8,535.2 557.9,504.0 558.0,519.4 558.1,520.6 558.3,524.5 558.4,541.3 558.5,552.7 558.6,531.6 558.7,521.0 558.8,516.1 559.0,515.3 559.1,520.6 559.2,545.1 559.3,525.7 559.4,534.3 559.5,532.8 559.6,543.5 559.8,546.1 559.9,524.9 560.0,528.2 560.1,544.5 560.2,538.2 560.3,514.2 560.4,545.1 560.6,535.2 560.7,535.6 560.8,545.3 560.9,527.9 561.0,537.8 561.1,538.1 561.3,525.3 561.4,538.6 561.5,538.4 561.6,539.5 561.7,536.2 561.8,531.8 561.9,544.6 562.1,544.3 562.2,559.8 562.3,561.3 562.4,563.1 562.5,546.8 562.6,571.0 562.7,559.0 562.9,552.6 563.0,526.4 563.1,555.9 563.2,550.5 563.3,558.9 563.4,568.1 563.6,543.8 563.7,568.3 563.8,567.4 563.9,563.5 564.0,561.2 564.1,563.2 564.2,531.1 564.4,527.8 564.5,538.3 564.6,560.5 564.7,557.2 564.8,529.5 564.9,557.4 565.0,564.0 565.2,557.3 565.3,552.8 565.4,566.9 565.5,557.9 565.6,560.1 565.7,561.2 565.9,563.0 566.0,537.9 566.1,568.5 566.2,556.3 566.3,586.0 566.4,555.6 566.5,563.1 566.7,560.5 566.8,551.3 566.9,569.4 567.0,557.3 567.1,562.6 567.2,553.0 567.3,576.9 567.5,557.4 567.6,573.2 567.7,574.5 567.8,562.1 567.9,563.2 568.0,580.7 568.2,573.3 568.3,579.3 568.4,552.7 568.5,551.6 568.6,562.3 568.7,562.8 568.8,556.9 569.0,563.3 569.1,562.8 569.2,566.7 569.3,550.2 569.4,568.7 569.5,546.7 569.6,570.8 569.8,564.1 569.9,570.3 570.0,555.2 570.1,584.3 570.2,565.8 570.3,565.4 570.5,562.0 570.6,587.8 570.7,576.8 570.8,581.5 570.9,571.4 571.0,584.5 571.1,571.2 571.3,571.7 571.4,603.1 571.5,580.4 571.6,572.0 571.7,570.2 571.8,590.3 571.9,570.3 572.1,604.8 572.2,585.1 572.3,582.9 572.4,581.0 572.5,597.0 572.6,580.7 572.8,595.4 572.9,582.7 573.0,596.5 573.1,563.8 573.2,586.4 573.3,562.4 573.4,598.9 573.6,586.9 573.7,571.7 573.8,563.6 573.9,594.8 574.0,601.6 574.1,583.0 574.2,590.1 574.4,584.2 574.5,590.5 574.6,592.0 574.7,598.5 574.8,589.5 574.9,586.0 575.1,567.8 575.2,609.3 575.3,588.2 575.4,588.9 575.5,576.1 575.6,587.4 575.7,583.3 575.9,583.6 576.0,591.0 576.1,590.4 576.2,579.8 576.3,593.4 576.4,598.8 576.5,595.6 576.7,584.1 576.8,609.5 576.9,580.8 577.0,583.3 577.1,580.0 577.2,598.9 577.4,603.0 577.5,588.2 577.6,579.8 577.7,583.6 577.8,581.2 577.9,571.7 578.0,591.6 578.2,592.2 578.3,588.9 578.4,576.4 578.5,593.3 578.6,594.2 578.7,596.3 578.8,596.6 579.0,581.8 579.1,581.3 579.2,591.9 579.3,603.7 579.4,587.1 579.5,588.6 579.7,603.8 579.8,581.0 579.9,589.8 580.0,595.0 580.1,598.6 580.2,597.2 580.3,589.4 580.5,590.8 580.6,585.4 580.7,606.8 580.8,589.6 580.9,575.8 581.0,587.8 581.1,590.5 581.3,588.6 581.4,581.3 581.5,599.7 581.6,594.7 581.7,597.1 581.8,587.2 582.0,577.1 582.1,592.2 582.2,608.5 582.3,574.6 582.4,572.0 582.5,581.7 582.6,579.8 582.8,598.6 582.9,591.0 583.0,597.2 583.1,591.9 583.2,575.2 583.3,574.5 583.4,596.3 583.6,604.1 583.7,589.0 583.8,599.2 583.9,608.0 584.0,581.9 584.1,591.5 584.3,597.2 584.4,589.6 584.5,588.8 584.6,587.0 584.7,595.7 584.8,588.9 584.9,581.2 585.1,593.8 585.2,600.0 585.3,576.9 585.4,589.0 585.5,588.8 585.6,575.5 585.7,571.5 585.9,593.4 586.0,585.8 586.1,598.5 586.2,598.4 586.3,577.0 586.4,581.9 586.6,588.6 586.7,602.7 586.8,589.1 586.9,587.0 587.0,596.5 587.1,584.6 587.2,596.3 587.4,599.8 587.5,587.2 587.6,584.3 587.7,597.3 587.8,600.6 587.9,585.8 588.0,581.0 588.2,588.2 588.3,598.2 588.4,594.5 588.5,605.0 588.6,594.3 588.7,593.6 588.9,596.7 589.0,586.6 589.1,574.6 589.2,594.0 589.3,591.6 589.4,589.5 589.5,595.2 589.7,577.0 589.8,592.7 589.9,599.9 590.0,593.3 590.1,587.4 590.2,601.8 590.3,582.8 590.5,581.6 590.6,605.3 590.7,587.7 590.8,593.1 590.9,596.3 591.0,604.5 591.2,593.2 591.3,596.1 591.4,589.1 591.5,593.8 591.6,584.2 591.7,590.7 591.8,586.5 592.0,592.4 592.1,605.9 592.2,600.1 592.3,599.1 592.4,600.9 592.5,608.0 592.6,578.1 592.8,595.1 592.9,588.7 593.0,587.2 593.1,582.7 593.2,589.7 593.3,588.3 593.5,588.3 593.6,595.4 593.7,594.8 593.8,600.6 593.9,594.1 594.0,593.6 594.1,592.6 594.3,602.3 594.4,611.9 594.5,593.6 594.6,591.7 594.7,592.6 594.8,592.4 594.9,597.4 595.1,588.7 595.2,609.0 595.3,604.4 595.4,596.1 595.5,589.3 595.6,590.2 595.8,603.3 595.9,609.9 596.0,605.3 596.1,591.4 596.2,588.0 596.3,602.9 596.4,603.7 596.6,607.9 596.7,587.0 596.8,594.8 596.9,595.7 597.0,577.1 597.1,596.7 597.2,604.7 597.4,598.3 597.5,596.9 597.6,596.2 597.7,600.7 597.8,589.9 597.9,593.2 598.1,588.7 598.2,602.6 598.3,597.7 598.4,594.8 598.5,595.8 598.6,603.8 598.7,583.5 598.9,607.6 599.0,577.4 599.1,594.1 599.2,591.9 599.3,600.7 599.4,592.8 599.5,599.3 599.7,599.2 599.8,598.2 599.9,590.8 600.0,602.3 600.1,589.2 600.2,600.5 600.4,587.5 600.5,593.4 600.6,604.1 600.7,591.2 600.8,595.6 600.9,583.0 601.0,594.1 601.2,591.9 601.3,600.0 601.4,601.6 601.5,596.0 601.6,589.3 601.7,589.5 601.8,581.1 602.0,606.8 602.1,585.9 602.2,582.5 602.3,587.1 602.4,582.8 602.5,604.8 602.7,590.1 602.8,585.1 602.9,601.2 603.0,577.5 603.1,584.2 603.2,599.1 603.3,586.3 603.5,583.5 603.6,571.3 603.7,586.1 603.8,587.6 603.9,596.0 604.0,588.9 604.1,586.5 604.3,587.4 604.4,582.5 604.5,590.4 604.6,590.4 604.7,584.8 604.8,577.1 605.0,587.2 605.1,587.6 605.2,597.8 605.3,588.1 605.4,586.4 605.5,585.3 605.6,595.1 605.8,587.5 605.9,587.9 606.0,577.1 606.1,592.6 606.2,582.7 606.3,591.3 606.4,588.1 606.6,595.2 606.7,582.4 606.8,580.4 606.9,585.2 607.0,593.9 607.1,576.0 607.3,582.9 607.4,588.4 607.5,579.0 607.6,582.5 607.7,577.7 607.8,574.7 607.9,587.3 608.1,576.5 608.2,586.1 608.3,575.6 608.4,592.4 608.5,589.0 608.6,593.3 608.7,585.1 608.9,583.9 609.0,594.9 609.1,579.4 609.2,583.4 609.3,577.5 609.4,585.8 609.6,566.4 609.7,578.3 609.8,580.4 609.9,576.1 610.0,579.3 610.1,582.0 610.2,582.4 610.4,575.1 610.5,583.3 610.6,577.5 610.7,582.2 610.8,594.4 610.9,563.8 611.0,583.6 611.2,592.6 611.3,569.4 611.4,576.2 611.5,571.9 611.6,587.1 611.7,571.2 611.9,578.6 612.0,572.3 612.1,569.8 612.2,582.4 612.3,591.2 612.4,584.9 612.5,569.1 612.7,575.2 612.8,579.7 612.9,579.4 613.0,572.0 613.1,579.9 613.2,580.0 613.3,579.1 613.5,578.5 613.6,576.6 613.7,573.9 613.8,584.2 613.9,584.1 614.0,578.6 614.2,573.0 614.3,582.4 614.4,579.5 614.5,578.4 614.6,566.9 614.7,568.1 614.8,583.4 615.0,577.8 615.1,568.3 615.2,589.7 615.3,580.5 615.4,573.1 615.5,579.5 615.6,572.0 615.8,582.2 615.9,571.9 616.0,564.7 616.1,562.3 616.2,570.7 616.3,576.4 616.5,575.0 616.6,576.2 616.7,575.2 616.8,569.5 616.9,576.6 617.0,566.9 617.1,575.9 617.3,567.3 617.4,568.8 617.5,576.7 617.6,577.0 617.7,576.5 617.8,583.8 617.9,573.5 618.1,573.1 618.2,575.9 618.3,573.5 618.4,571.1 618.5,581.6 618.6,569.0 618.8,563.0 618.9,577.8 619.0,572.3 619.1,575.2 619.2,577.4 619.3,574.8 619.4,567.6 619.6,570.6 619.7,567.4 619.8,566.6 619.9,573.7 620.0,562.6 620.1,566.2 620.2,581.9 620.4,567.6 620.5,568.0 620.6,577.2 620.7,567.5 620.8,564.6 620.9,570.0 621.1,571.7 621.2,572.4 621.3,576.5 621.4,566.0 621.5,569.9 621.6,562.6 621.7,576.9 621.9,571.1 622.0,561.5 622.1,580.2 622.2,568.5 622.3,578.0 622.4,569.6 622.5,565.8 622.7,563.3 622.8,570.1 622.9,565.9 623.0,575.4 623.1,571.7 623.2,567.7 623.4,559.6 623.5,563.4 623.6,562.5 623.7,564.0 623.8,564.9 623.9,561.7 624.0,570.3 624.2,571.0 624.3,555.1 624.4,569.3 624.5,570.9 624.6,567.2 624.7,569.7 624.8,561.0 625.0,566.9 625.1,570.7 625.2,564.3 625.3,564.9 625.4,570.0 625.5,566.6 625.7,565.1 625.8,565.0 625.9,562.2 626.0,568.3 626.1,560.5 626.2,559.3 626.3,555.6 626.5,560.8 626.6,559.6 626.7,559.8 626.8,557.9 626.9,567.9 627.0,569.6 627.1,561.8 627.3,560.2 627.4,569.6 627.5,565.3 627.6,562.7 627.7,569.3 627.8,562.2 628.0,569.1 628.1,549.9 628.2,572.1 628.3,557.8 628.4,560.5 628.5,561.9 628.6,560.6 628.8,561.1 628.9,567.1 629.0,560.1 629.1,558.8 629.2,558.9 629.3,568.0 629.4,565.6 629.6,570.6 629.7,555.7 629.8,552.6 629.9,559.1 630.0,554.9 630.1,560.1 630.3,562.4 630.4,561.3 630.5,569.3 630.6,546.7 630.7,560.2 630.8,552.3 630.9,559.7 631.1,549.1 631.2,559.6 631.3,558.2 631.4,561.4 631.5,560.7 631.6,557.2 631.7,554.1 631.9,551.9 632.0,555.8 632.1,547.6 632.2,565.6 632.3,557.3 632.4,543.0 632.6,566.0 632.7,556.6 632.8,551.5 632.9,558.0 633.0,565.9 633.1,555.4 633.2,551.4 633.4,555.1 633.5,557.1 633.6,546.9 633.7,555.2 633.8,547.3 633.9,546.8 634.0,543.0 634.2,543.8 634.3,543.4 634.4,544.5 634.5,556.7 634.6,549.4 634.7,557.3 634.9,546.4 635.0,533.7 635.1,555.7 635.2,548.8 635.3,547.0 635.4,541.7 635.5,541.2 635.7,547.6 635.8,554.4 635.9,532.6 636.0,528.1 636.1,542.4 636.2,541.3 636.3,528.6 636.5,538.5 636.6,544.9 636.7,541.8 636.8,535.0 636.9,526.3 637.0,527.7 637.2,527.5 637.3,540.6 637.4,536.4 637.5,549.5 637.6,548.5 637.7,537.5 637.8,523.3 638.0,538.1 638.1,531.5 638.2,532.5 638.3,537.0 638.4,533.4 638.5,523.2 638.6,524.3 638.8,527.6 638.9,523.0 639.0,539.4 639.1,531.4 639.2,524.2 639.3,532.9 639.5,527.5 639.6,541.6 639.7,529.1 639.8,544.8 639.9,533.1 640.0,521.9 640.1,531.5 640.3,537.4 640.4,527.7 640.5,524.0 640.6,539.5 640.7,549.8 640.8,545.8 640.9,551.5 641.1,541.5 641.2,551.9 641.3,538.1 641.4,538.1 641.5,545.2 641.6,557.6 641.8,549.1 641.9,554.3 642.0,548.2 642.1,566.4 642.2,545.0 642.3,561.7 642.4,553.3 642.6,562.7 642.7,572.1 642.8,572.2 642.9,571.6 643.0,571.6 643.1,571.2 643.2,557.3 643.4,563.5 643.5,561.1 643.6,543.4 643.7,570.9 643.8,572.3 643.9,571.3 644.1,567.5 644.2,564.4 644.3,551.9 644.4,557.7 644.5,558.9 644.6,572.3 644.7,561.0 644.9,549.5 645.0,560.7 645.1,561.8 645.2,579.0 645.3,570.6 645.4,575.5 645.5,589.2 645.7,575.5 645.8,585.2 645.9,549.0 646.0,564.0 646.1,564.5 646.2,572.1 646.4,583.7 646.5,561.8 646.6,563.8 646.7,583.3 646.8,565.0 646.9,566.1 647.0,589.5 647.2,581.4 647.3,553.1 647.4,565.2 647.5,557.5 647.6,562.2 647.7,564.4 647.8,575.8 648.0,563.9 648.1,568.7 648.2,567.0 648.3,570.2 648.4,566.7 648.5,570.5 648.7,551.9 648.8,584.7 648.9,548.8 649.0,574.6 649.1,589.8 649.2,585.8 649.3,578.4 649.5,577.7 649.6,568.8 649.7,547.6 649.8,566.3 649.9,579.8 650.0,559.6 650.1,571.4 650.3,580.8 650.4,570.1 650.5,583.3 650.6,561.5 650.7,592.6 650.8,585.8 651.0,578.8 651.1,568.7 651.2,575.8 651.3,577.7 651.4,565.4 651.5,570.3 651.6,585.5 651.8,585.7 651.9,572.6 652.0,563.5 652.1,565.5 652.2,549.9 652.3,569.5 652.4,552.6 652.6,551.1 652.7,566.9 652.8,578.8 652.9,576.7 653.0,572.5 653.1,584.0 653.3,552.1 653.4,569.1 653.5,567.4 653.6,563.8 653.7,577.0 653.8,554.2 653.9,561.9 654.1,553.9 654.2,565.9 654.3,582.7 654.4,564.3 654.5,565.2 654.6,564.8 654.7,561.3 654.9,572.1 655.0,573.3 655.1,572.9 655.2,573.5 655.3,557.5 655.4,542.9 655.6,573.4 655.7,566.8 655.8,589.8 655.9,559.1 656.0,555.1 656.1,545.2 656.2,551.9 656.4,565.2 656.5,568.0 656.6,550.7 656.7,558.5 656.8,564.9 656.9,557.1 657.0,575.2 657.2,581.3 657.3,568.3 657.4,556.3 657.5,560.0 657.6,578.2 657.7,550.0 657.9,559.5 658.0,582.2 658.1,541.7 658.2,564.4 658.3,563.9 658.4,566.5 658.5,550.1 658.7,569.3 658.8,537.8 658.9,545.2 659.0,570.3 659.1,566.2 659.2,551.7 659.3,537.9 659.5,532.2 659.6,529.4 659.7,537.5 659.8,561.0 659.9,562.2 660.0,557.9 660.2,549.1 660.3,526.7 660.4,549.4 660.5,524.4 660.6,567.0 660.7,539.9 660.8,556.8 661.0,545.1 661.1,541.1 661.2,539.0 661.3,550.1 661.4,550.4 661.5,549.5 661.6,543.3 661.8,530.1 661.9,566.9 662.0,555.2 662.1,541.8 662.2,549.3 662.3,535.3 662.5,527.9 662.6,536.8 662.7,556.0 662.8,520.6 662.9,532.3 663.0,526.6 663.1,558.5 663.3,543.6 663.4,536.9 663.5,545.2 663.6,547.5 663.7,511.8 663.8,537.0 663.9,530.1 664.1,522.8 664.2,517.0 664.3,520.6 664.4,534.4 664.5,534.2 664.6,545.0 664.8,508.0 664.9,538.7 665.0,532.8 665.1,505.9 665.2,511.4 665.3,523.0 665.4,512.8 665.6,520.0 665.7,515.5 665.8,515.2 665.9,517.3 666.0,516.7 666.1,522.8 666.2,522.8 666.4,536.4 666.5,511.6 666.6,522.7 666.7,512.8 666.8,520.3 666.9,517.5 667.1,522.5 667.2,515.2 667.3,511.9 667.4,509.4 667.5,515.8 667.6,515.1 667.7,517.6 667.9,509.4 668.0,509.8 668.1,502.0 668.2,506.0 668.3,509.5 668.4,500.1 668.5,504.0 668.7,522.1 668.8,527.6 668.9,489.3 669.0,525.3 669.1,502.1 669.2,524.6 669.4,496.6 669.5,500.6 669.6,511.7 669.7,512.6" fill="none" stroke="#000" stroke-width="0.95" stroke-linejoin="round"/>
<text x="261" y="652.6" text-anchor="end" xml:space="preserve"><tspan font-family="'DejaVu Sans', sans-serif" font-size="15.75">00:00</tspan></text>
<text x="261" y="672.6" text-anchor="end" xml:space="preserve"><tspan font-family="'DejaVu Sans', sans-serif" font-size="15.75">4.225</tspan></text>
<text x="261" y="692.6" text-anchor="end" xml:space="preserve"><tspan font-family="'DejaVu Sans', sans-serif" font-size="15.75">-10.580</tspan></text>
<text x="261" y="712.6" text-anchor="end" xml:space="preserve"><tspan font-family="'DejaVu Sans', sans-serif" font-size="15.75">2.247</tspan></text>
<text x="261" y="732.6" text-anchor="end" xml:space="preserve"><tspan font-family="'DejaVu Sans', sans-serif" font-size="15.75">4.373</tspan></text>
<text x="477.4" y="652.6" text-anchor="end" xml:space="preserve"><tspan font-family="'DejaVu Sans', sans-serif" font-size="15.75">12:00</tspan></text>
<text x="477.4" y="672.6" text-anchor="end" xml:space="preserve"><tspan font-family="'DejaVu Sans', sans-serif" font-size="15.75">5.756</tspan></text>
<text x="477.4" y="692.6" text-anchor="end" xml:space="preserve"><tspan font-family="'DejaVu Sans', sans-serif" font-size="15.75">-1.544</tspan></text>
<text x="477.4" y="712.6" text-anchor="end" xml:space="preserve"><tspan font-family="'DejaVu Sans', sans-serif" font-size="15.75">5.398</tspan></text>
<text x="477.4" y="732.6" text-anchor="end" xml:space="preserve"><tspan font-family="'DejaVu Sans', sans-serif" font-size="15.75">5.760</tspan></text>
<text x="693.4" y="652.6" text-anchor="end" xml:space="preserve"><tspan font-family="'DejaVu Sans', sans-serif" font-size="15.75">00:00</tspan></text>
<text x="693.4" y="672.6" text-anchor="end" xml:space="preserve"><tspan font-family="'DejaVu Sans', sans-serif" font-size="15.75">3.179</tspan></text>
<text x="693.4" y="692.6" text-anchor="end" xml:space="preserve"><tspan font-family="'DejaVu Sans', sans-serif" font-size="15.75">-16.190</tspan></text>
<text x="693.4" y="712.6" text-anchor="end" xml:space="preserve"><tspan font-family="'DejaVu Sans', sans-serif" font-size="15.75">8.125</tspan></text>
<text x="693.4" y="732.6" text-anchor="end" xml:space="preserve"><tspan font-family="'DejaVu Sans', sans-serif" font-size="15.75">3.447</tspan></text>
<text x="168.5" y="672.6" text-anchor="end"><tspan font-family="'Liberation Sans', sans-serif" font-size="16.4">R</tspan></text>
<text x="168.3" y="677.2" font-family="'DejaVu Sans', sans-serif" font-size="9" font-weight="bold">E</text>
<text x="174.4" y="692.6" text-anchor="end" xml:space="preserve"><tspan font-family="'Liberation Sans', sans-serif" font-size="16.4">MLat</tspan></text>
<text x="174.4" y="712.6" text-anchor="end" xml:space="preserve"><tspan font-family="'Liberation Sans', sans-serif" font-size="16.4">MLT</tspan></text>
<text x="174.4" y="732.6" text-anchor="end" xml:space="preserve"><tspan font-family="'Liberation Sans', sans-serif" font-size="16.4">L</tspan></text>
<text x="453.9" y="756.6" text-anchor="middle" font-family="'DejaVu Sans', sans-serif" font-size="15.75">2012-12-01 (336) 23:00 to 2012-12-03 (338) 01:00</text>
</svg></div>
<div id="popup">
<div class="abs" style="left:388px;top:59px;width:279px;height:367px;border:1px solid #6382bf;background:#eee;box-shadow:inset 1px 1px 0 #fff;"></div>
<div class="abs" style="left:389px;top:81px;width:277px;height:2px;background:#fff;border-top:1px solid #6382bf;"></div>
<div class="abs" style="left:389px;top:141px;width:277px;height:2px;background:#fff;border-top:1px solid #6382bf;"></div>
<div class="abs" style="left:389px;top:182px;width:277px;height:2px;background:#fff;border-top:1px solid #6382bf;"></div>
<div class="abs" style="left:389px;top:262px;width:277px;height:2px;background:#fff;border-top:1px solid #6382bf;"></div>
<div class="abs" style="left:389px;top:305px;width:277px;height:2px;background:#fff;border-top:1px solid #6382bf;"></div>
<div class="abs" style="left:389px;top:327px;width:277px;height:2px;background:#fff;border-top:1px solid #6382bf;"></div>
<div class="abs" style="left:389px;top:80px;width:277px;height:1px;background:#fff;"></div>
<div class="abs" style="left:389px;top:184px;width:277px;height:19px;background:#a3b8cc;border-top:1px solid #7088bd;border-bottom:1px solid #fff;"></div>
<div class="t" style="top:62.00px;font-size:12.3px;font-family:'DejaVu Sans', 'Liberation Sans', sans-serif;color:#333;font-weight:bold;left:415.00px;letter-spacing:0.264px;">Cache</div>
<div class="t" style="top:83.00px;font-size:12.3px;font-family:'DejaVu Sans', 'Liberation Sans', sans-serif;color:#333;font-weight:bold;left:415.00px;letter-spacing:0.144px;">PNG Walk Viewer</div>
<div class="t" style="top:102.00px;font-size:12.3px;font-family:'DejaVu Sans', 'Liberation Sans', sans-serif;color:#333;font-weight:bold;left:415.00px;letter-spacing:0.154px;">Create PNG Walk...</div>
<div class="t" style="top:121.00px;font-size:12.3px;font-family:'DejaVu Sans', 'Liberation Sans', sans-serif;color:#333;font-weight:bold;left:415.00px;letter-spacing:0.112px;">Run Batch...</div>
<div class="t" style="top:144.00px;font-size:12.3px;font-family:'DejaVu Sans', 'Liberation Sans', sans-serif;color:#333;font-weight:bold;left:415.00px;letter-spacing:0.072px;">Events List</div>
<div class="t" style="top:163.00px;font-size:12.3px;font-family:'DejaVu Sans', 'Liberation Sans', sans-serif;color:#333;font-weight:bold;left:415.00px;letter-spacing:0.037px;">Fix Layout</div>
<div class="t" style="top:163.00px;font-size:9.8px;font-family:'DejaVu Sans', 'Liberation Sans', sans-serif;color:#6382bf;right:693.00px;text-align:right;">Ctrl-F</div>
<div class="t" style="top:184.00px;font-size:12.3px;font-family:'DejaVu Sans', 'Liberation Sans', sans-serif;color:#333;font-weight:bold;left:415.00px;letter-spacing:0.196px;">Aggregate...</div>
<div class="t" style="top:203.00px;font-size:12.3px;font-family:'DejaVu Sans', 'Liberation Sans', sans-serif;color:#333;font-weight:bold;left:415.00px;letter-spacing:0.2px;">Replace File...</div>
<div class="t" style="top:222.00px;font-size:12.3px;font-family:'DejaVu Sans', 'Liberation Sans', sans-serif;color:#333;font-weight:bold;left:415.00px;letter-spacing:0.31px;">Mash Data...</div>
<div class="t" style="top:242.00px;font-size:12.3px;font-family:'DejaVu Sans', 'Liberation Sans', sans-serif;color:#333;font-weight:bold;left:415.00px;letter-spacing:0.173px;">Additional Operations...</div>
<div class="t" style="top:264.00px;font-size:12.3px;font-family:'DejaVu Sans', 'Liberation Sans', sans-serif;color:#333;font-weight:bold;left:415.00px;letter-spacing:0.073px;">Decode URL</div>
<div class="t" style="top:284.00px;font-size:12.3px;font-family:'DejaVu Sans', 'Liberation Sans', sans-serif;color:#333;font-weight:bold;left:415.00px;letter-spacing:0.157px;">Reload All Data</div>
<div class="t" style="top:284.00px;font-size:9.8px;font-family:'DejaVu Sans', 'Liberation Sans', sans-serif;color:#6382bf;right:693.00px;text-align:right;">Ctrl-L</div>
<div class="t" style="top:308.00px;font-size:12.3px;font-family:'DejaVu Sans', 'Liberation Sans', sans-serif;color:#333;font-weight:bold;left:415.00px;letter-spacing:0.359px;">Manage and Browse Tools...</div>
<div class="t" style="top:329.00px;font-size:12.3px;font-family:'DejaVu Sans', 'Liberation Sans', sans-serif;color:#333;font-weight:bold;left:415.00px;letter-spacing:0.206px;">Create Screen Shot</div>
<div class="t" style="top:348.00px;font-size:12.3px;font-family:'DejaVu Sans', 'Liberation Sans', sans-serif;color:#333;font-weight:bold;left:415.00px;letter-spacing:0.105px;">Start SAMP Hub and Listener</div>
<div class="t" style="top:367.00px;font-size:12.3px;font-family:'DejaVu Sans', 'Liberation Sans', sans-serif;color:#333;font-weight:bold;left:415.00px;letter-spacing:0.198px;">startScreenShots.jy</div>
<div class="t" style="top:386.00px;font-size:12.3px;font-family:'DejaVu Sans', 'Liberation Sans', sans-serif;color:#333;font-weight:bold;left:415.00px;letter-spacing:0.147px;">updateAutoplot.jy</div>
<div class="t" style="top:405.00px;font-size:12.3px;font-family:'DejaVu Sans', 'Liberation Sans', sans-serif;color:#333;font-weight:bold;left:415.00px;letter-spacing:-0.042px;">realTime.jy</div>
<svg width="1345" height="916"><path d="M655.9 66.8 L660.2 71 L655.9 75.3 Z" fill="#2e2e2e"/><g><rect x="395.9" y="244.2" width="1.9" height="13.6" fill="#4a4a4a"/><rect x="400.7" y="244.2" width="1.7" height="13.6" fill="#4a4a4a"/><rect x="406.2" y="244.2" width="1.8" height="13.6" fill="#4a4a4a"/><rect x="401" y="252.2" width="6" height="1.3" fill="#666"/><path d="M403 252 L397.6 256.6" stroke="#f2a51e" stroke-width="1.9" stroke-linecap="round"/><path d="M400 254.6 L397.4 256.8" stroke="#e2571e" stroke-width="1.2" stroke-linecap="round"/><circle cx="404.8" cy="249.2" r="3.3" fill="#b9d8fb" stroke="#a9b6c9" stroke-width="0.9"/><circle cx="404.2" cy="248.4" r="1.5" fill="#dcebfd"/></g><defs><linearGradient id="rl" x1="0" y1="0" x2="0" y2="1"><stop offset="0" stop-color="#7fb2ea"/><stop offset="1" stop-color="#3f7ccc"/></linearGradient></defs><path d="M405.6 289.7 A4.5 4.5 0 1 0 406.1 296.2" fill="none" stroke="url(#rl)" stroke-width="3.9"/><path d="M410 286.2 L410 292.7 L403.2 292.3 Z" fill="#5b97dc"/></svg>
</div>
<div id="tooltip">
<div class="abs" style="left:461px;top:208px;width:204px;height:17px;border:1px solid #6382bf;background:#b8cfe5;"></div>
<div class="t" style="top:207.00px;font-size:12.4px;font-family:'DejaVu Sans', 'Liberation Sans', sans-serif;color:#333;left:464.30px;">Combine files into a time series</div>
</div>
<svg id="cursor" width="1345" height="916"><defs><filter id="csh" x="-30%" y="-30%" width="170%" height="170%"><feGaussianBlur stdDeviation="1"/></filter><linearGradient id="cg" x1="0" y1="0" x2="1" y2="1"><stop offset="0" stop-color="#fff"/><stop offset="0.6" stop-color="#fff"/><stop offset="1" stop-color="#cfcfcf"/></linearGradient></defs><path d="M467.1 195.3 L467.1 223.4 L476.9 218.3 L486.2 237.6 L494.2 233.2 L484.6 214.6 L492.4 210.6 Z" fill="#000" opacity="0.3" filter="url(#csh)"/><path d="M466.1 193.3 L466.1 221.4 L475.9 216.3 L485.2 235.6 L493.2 231.2 L483.6 212.6 L491.4 208.6 Z" fill="url(#cg)" stroke="#161616" stroke-width="3.2" stroke-linejoin="round"/></svg>
</div>
</body></html>
